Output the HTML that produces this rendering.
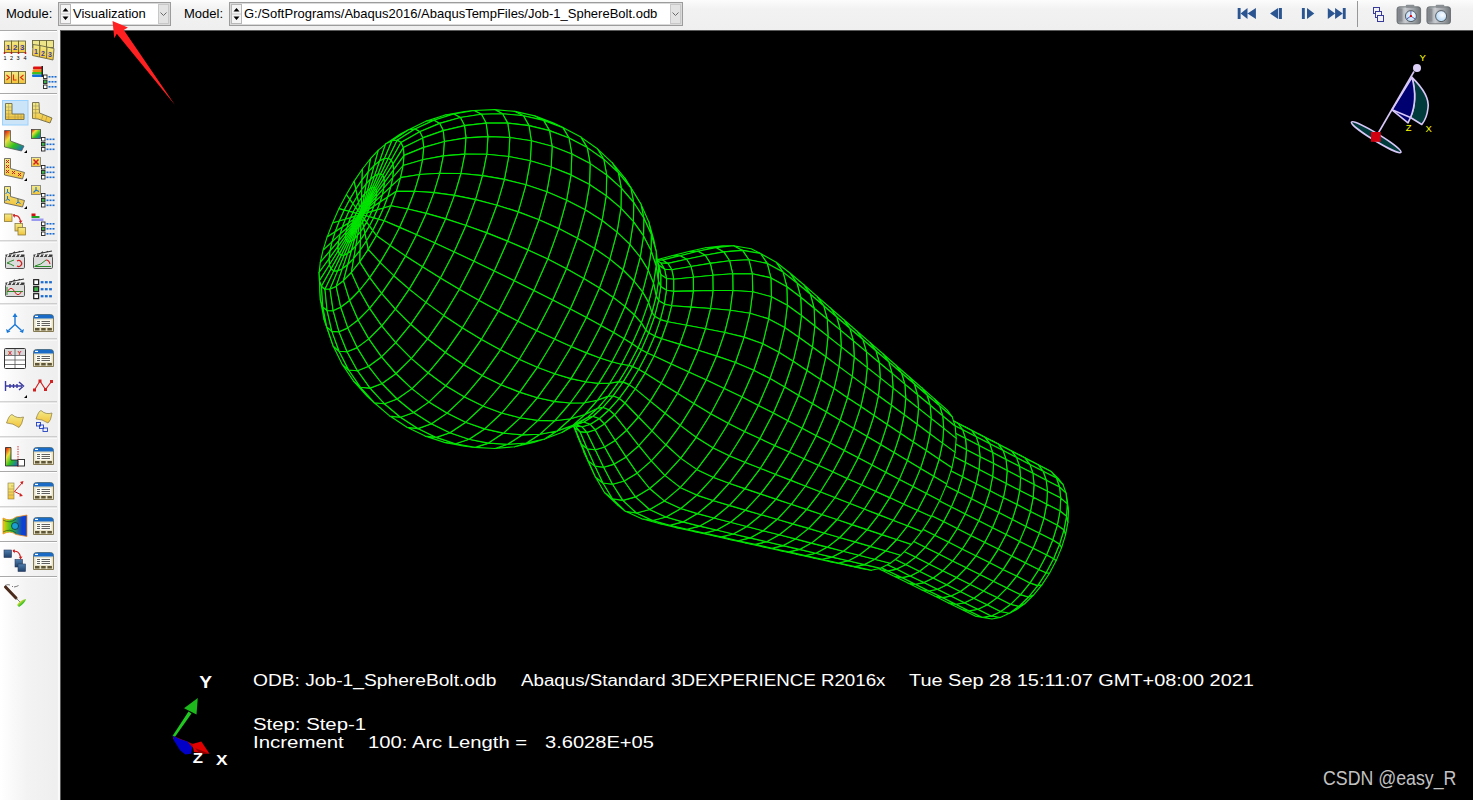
<!DOCTYPE html>
<html><head><meta charset="utf-8">
<style>
*{margin:0;padding:0;box-sizing:border-box}
html,body{width:1473px;height:800px;overflow:hidden;background:#000;font-family:"Liberation Sans",sans-serif}
#top{position:absolute;left:0;top:0;width:1473px;height:30px;background:linear-gradient(#fcfcfc 0%,#f2f2f2 30%,#efefef 100%)}
#left{position:absolute;left:0;top:30px;width:60px;height:770px;background:linear-gradient(90deg,#ffffff 0%,#f3f3f3 45%,#eeeeee 100%)}
#left .sep{position:absolute;left:0;width:57px;height:2px;border-top:1px solid #a9a9a9;border-bottom:1px solid #fff}
#left .edge{position:absolute;left:57px;top:0;width:3px;height:770px;background:linear-gradient(90deg,#eaeaea,#fafafa,#f5f5f5)}
#vp{position:absolute;left:60px;top:30px;width:1413px;height:770px;background:#000;box-shadow:inset 1px 1px 0 #5a5a5a}
.lbl{position:absolute;font-size:13px;color:#000;top:6px;line-height:16px}
.combo{position:absolute;top:2px;height:24px;background:#fff;border:1px solid #9c9c9c;box-shadow:inset 0 0 0 1px #dadada}
.spin{position:absolute;left:1px;top:1px;width:11px;height:20px;border:1px solid #b8b8b8;background:#f4f4f4}
.ctext{position:absolute;top:3px;font-size:13px;line-height:16px;color:#000;white-space:nowrap}
.dd{position:absolute;right:1px;top:1px;width:11px;height:20px;background:#e3e3e3;border:1px solid #c8c8c8}
.ico{position:absolute}
.txt{position:absolute;color:#fff;font-size:16px;line-height:16px;white-space:nowrap}
</style></head><body>
<div id="top">
  <div class="lbl" style="left:6px">Module:</div>
  <div class="combo" style="left:58px;width:113px">
    <div class="spin"><svg width="9" height="18" style="position:absolute;left:0;top:0"><path d="M1.5 6.5 L4.5 3 L7.5 6.5Z M1.5 11.5 L4.5 15 L7.5 11.5Z" fill="#000"/><line x1="0" y1="9" x2="9" y2="9" stroke="#c8c8c8"/></svg></div>
    <div class="ctext" style="left:14px">Visualization</div>
    <div class="dd"><svg width="9" height="18" style="position:absolute;left:0;top:0"><path d="M1.5 7.5 L4.5 10.5 L7.5 7.5" fill="none" stroke="#6a6a6a" stroke-width="1"/></svg></div>
  </div>
  <div class="lbl" style="left:184px">Model:</div>
  <div class="combo" style="left:229px;width:454px">
    <div class="spin"><svg width="9" height="18" style="position:absolute;left:0;top:0"><path d="M1.5 6.5 L4.5 3 L7.5 6.5Z M1.5 11.5 L4.5 15 L7.5 11.5Z" fill="#000"/><line x1="0" y1="9" x2="9" y2="9" stroke="#c8c8c8"/></svg></div>
    <div class="ctext" style="left:14px">G:/SoftPrograms/Abaqus2016/AbaqusTempFiles/Job-1_SphereBolt.odb</div>
    <div class="dd"><svg width="9" height="18" style="position:absolute;left:0;top:0"><path d="M1.5 7.5 L4.5 10.5 L7.5 7.5" fill="none" stroke="#6a6a6a" stroke-width="1"/></svg></div>
  </div>
  <svg width="1473" height="30" style="position:absolute;left:0;top:0">
<g fill="#2b5591">
<rect x="1237.7" y="8" width="2.9" height="11"/><path d="M1240.6 13.5 L1247.5 8 L1247.5 19Z M1247.5 13.5 L1255.9 8 L1255.9 19Z"/>
<path d="M1270 13.5 L1278.1 8 L1278.1 19Z"/><rect x="1278.9" y="8" width="3" height="11"/>
<rect x="1301.9" y="8" width="2.9" height="11"/><path d="M1307 8 L1314.3 13.5 L1307 19Z"/>
<path d="M1327.8 8 L1335.1 13.5 L1327.8 19Z M1335.1 8 L1342.8 13.5 L1335.1 19Z"/><rect x="1342.8" y="8" width="2.9" height="11"/>
</g>
<rect x="1357" y="1" width="1" height="26" fill="#979797"/>
<g fill="none" stroke="#3a3a9a" stroke-width="1">
<rect x="1373.5" y="7.5" width="6" height="6" fill="#f2f2f2"/><rect x="1375.5" y="11.5" width="6" height="6" fill="#f2f2f2"/><rect x="1377.5" y="15.5" width="6" height="6" fill="#f2f2f2"/>
</g>
<defs>
<linearGradient id="cam" x1="0" x2="1"><stop offset="0" stop-color="#7d8288"/><stop offset="0.35" stop-color="#c9ccd0"/><stop offset="0.7" stop-color="#9ea3a8"/><stop offset="1" stop-color="#6e7378"/></linearGradient>
<radialGradient id="lens" cx="0.6" cy="0.4" r="0.7"><stop offset="0" stop-color="#ffffff"/><stop offset="1" stop-color="#a9d2f5"/></radialGradient>
</defs>
<g>
<rect x="1397" y="6.8" width="23.6" height="17" rx="2.5" fill="url(#cam)" stroke="#5f6468" stroke-width="0.8"/>
<rect x="1405.8" y="4.8" width="8.6" height="3" rx="1" fill="#8a8f94"/>
<rect x="1398.5" y="8.5" width="4" height="13" fill="#6f7479" opacity="0.5"/>
<circle cx="1410.9" cy="16.1" r="5.5" fill="url(#lens)" stroke="#4a4f55" stroke-width="0.9"/>
<path d="M1410.9 16.1 L1410.9 11 M1410.9 16.1 L1406.8 18.9 M1410.9 16.1 L1415 18.9" stroke="#3a3aa0" stroke-width="0.8"/>
<rect x="1409.9" y="15.1" width="2" height="2" fill="#e00000"/>
</g>
<g>
<rect x="1426.9" y="6.8" width="23.6" height="17" rx="2.5" fill="url(#cam)" stroke="#5f6468" stroke-width="0.8"/>
<rect x="1435.7" y="4.8" width="8.6" height="3" rx="1" fill="#8a8f94"/>
<rect x="1428.4" y="8.5" width="4" height="13" fill="#6f7479" opacity="0.5"/>
<circle cx="1441.1" cy="16.1" r="5.5" fill="url(#lens)" stroke="#4a4f55" stroke-width="0.9"/>
</g>
</svg>

</div>
<div id="left">
  <div class="edge"></div>
  <svg width="60" height="800" style="position:absolute;left:0;top:-30px">
<defs>
<linearGradient id="yel" x1="0" y1="0" x2="0" y2="1"><stop offset="0" stop-color="#f3ec8a"/><stop offset="1" stop-color="#f2c23a"/></linearGradient>
<linearGradient id="rb" x1="0" y1="0" x2="1" y2="1"><stop offset="0" stop-color="#e00000"/><stop offset="0.3" stop-color="#f0e040"/><stop offset="0.6" stop-color="#30c020"/><stop offset="1" stop-color="#1060e0"/></linearGradient>
<linearGradient id="bsq" x1="0" y1="0" x2="0" y2="1"><stop offset="0" stop-color="#4f7fae"/><stop offset="1" stop-color="#1e3f6a"/></linearGradient>
<g id="win"><path d="M0.5 3.5 Q0.5 0.5 3.5 0.5 L17.5 0.5 Q20.5 0.5 20.5 3.5 L20.5 17.5 L0.5 17.5Z" fill="#e8e2c8" stroke="#857a52"/>
<path d="M0.5 3.5 Q0.5 0.5 3.5 0.5 L17.5 0.5 Q20.5 0.5 20.5 3.5 L20.5 4.5 L0.5 4.5Z" fill="#1a6bc6"/>
<rect x="2" y="1.8" width="3" height="1.2" fill="#fff"/>
<rect x="2.5" y="6" width="16" height="7" fill="#fbfaf3"/>
<g stroke="#3a3a3a" stroke-width="0.8"><line x1="4" y1="7.5" x2="7" y2="7.5"/><line x1="8.5" y1="7.5" x2="17" y2="7.5"/><line x1="4" y1="9.5" x2="7" y2="9.5"/><line x1="8.5" y1="9.5" x2="17" y2="9.5"/><line x1="4" y1="11.5" x2="7" y2="11.5"/><line x1="8.5" y1="11.5" x2="17" y2="11.5"/></g>
<rect x="2" y="14" width="4.5" height="2.5" fill="#5e5636"/><rect x="8.2" y="14" width="4.5" height="2.5" fill="#5e5636"/><rect x="14.4" y="14" width="4.5" height="2.5" fill="#5e5636"/></g>
<g id="chk"><rect x="0.5" y="0.5" width="3.5" height="3.5" fill="#fff" stroke="#222" stroke-width="0.9"/><rect x="0.5" y="5.5" width="3.5" height="3.5" fill="#3fb24a" stroke="#222" stroke-width="0.9"/><rect x="0.5" y="10.5" width="3.5" height="3.5" fill="#fff" stroke="#222" stroke-width="0.9"/>
<g fill="#1a6bd0"><rect x="5.5" y="1.5" width="2" height="1.6"/><rect x="8.5" y="1.5" width="2" height="1.6"/><rect x="11.5" y="1.5" width="2" height="1.6"/><rect x="5.5" y="6.5" width="2" height="1.6"/><rect x="8.5" y="6.5" width="2" height="1.6"/><rect x="11.5" y="6.5" width="2" height="1.6"/><rect x="5.5" y="11.5" width="2" height="1.6"/><rect x="8.5" y="11.5" width="2" height="1.6"/><rect x="11.5" y="11.5" width="2" height="1.6"/></g></g>
<g id="clap"><rect x="0.5" y="4.5" width="19" height="12" rx="1.2" fill="#dcdcdc" stroke="#555"/>
<path d="M0.5 4.5 L19.5 4.5 L19.5 2.5 L0.5 2.5Z" fill="#333"/>
<path d="M2 4.5 L4 2.5 M6 4.5 L8 2.5 M10 4.5 L12 2.5 M14 4.5 L16 2.5" stroke="#fff" stroke-width="1.2"/>
<path d="M4 2 L19 -1 M8 1.2 L10 -0.3 M13 0.2 L15 -0.8" stroke="#333" stroke-width="1.2"/></g>
<path id="tri" d="M0 3 L3 0 L3 3Z" fill="#000"/>
</defs>
<rect x="0" y="30" width="57" height="1" fill="#a9a9a9"/><rect x="0" y="31" width="57" height="1" fill="#fff"/>
<rect x="0" y="93" width="57" height="1" fill="#a9a9a9"/><rect x="0" y="94" width="57" height="1" fill="#fff"/>
<rect x="0" y="240.5" width="57" height="1" fill="#a9a9a9"/><rect x="0" y="241.5" width="57" height="1" fill="#fff"/>
<rect x="0" y="303.5" width="57" height="1" fill="#a9a9a9"/><rect x="0" y="304.5" width="57" height="1" fill="#fff"/>
<rect x="0" y="338.5" width="57" height="1" fill="#a9a9a9"/><rect x="0" y="339.5" width="57" height="1" fill="#fff"/>
<rect x="0" y="401.5" width="57" height="1" fill="#a9a9a9"/><rect x="0" y="402.5" width="57" height="1" fill="#fff"/>
<rect x="0" y="436.5" width="57" height="1" fill="#a9a9a9"/><rect x="0" y="437.5" width="57" height="1" fill="#fff"/>
<rect x="0" y="471" width="57" height="1" fill="#a9a9a9"/><rect x="0" y="472" width="57" height="1" fill="#fff"/>
<rect x="0" y="506.5" width="57" height="1" fill="#a9a9a9"/><rect x="0" y="507.5" width="57" height="1" fill="#fff"/>
<rect x="0" y="541" width="57" height="1" fill="#a9a9a9"/><rect x="0" y="542" width="57" height="1" fill="#fff"/>
<rect x="0" y="576" width="57" height="1" fill="#a9a9a9"/><rect x="0" y="577" width="57" height="1" fill="#fff"/>
<g stroke="#6b6640" stroke-width="0.9" fill="url(#yel)"><rect x="4.5" y="41" width="7" height="11.5"/><rect x="11.5" y="41" width="7" height="11.5"/><rect x="18.5" y="41" width="7" height="11.5"/></g>
<g font-family="Liberation Sans" font-size="8" fill="#3a3aa0" font-weight="bold"><text x="6" y="50">1</text><text x="13" y="50">2</text><text x="20" y="50">3</text></g>
<g fill="#e00000"><circle cx="4.5" cy="53" r="0.9"/><circle cx="11.5" cy="53" r="0.9"/><circle cx="18.5" cy="53" r="0.9"/><circle cx="25.5" cy="53" r="0.9"/></g>
<g font-family="Liberation Sans" font-size="5.5" fill="#000"><text x="3.5" y="60">1</text><text x="10" y="60">2</text><text x="16.5" y="60">3</text><text x="23.5" y="60">4</text></g>
<g stroke="#6b6640" stroke-width="0.9" fill="#eee58a"><rect x="32.5" y="40.5" width="7" height="7"/><rect x="39.5" y="40.5" width="7" height="7"/><rect x="46.5" y="40.5" width="7" height="7"/></g>
<g stroke="#6b6640" stroke-width="0.9" fill="url(#yel)"><path d="M33 44.5 L40 45.5 L39.5 57 L32.5 55.5Z"/><path d="M40 45.5 L47 47 L46.5 58.5 L39.5 57Z"/><path d="M47 47 L54 48.5 L53 60 L46.5 58.5Z"/></g>
<g font-family="Liberation Sans" font-size="7" fill="#3a3aa0" font-weight="bold"><text x="34" y="54">1</text><text x="41" y="55.5">2</text><text x="48" y="57">3</text></g>
<g stroke="#6b6640" stroke-width="0.9" fill="url(#yel)"><rect x="4.5" y="71.5" width="7" height="12"/><rect x="11.5" y="71.5" width="7" height="12"/><rect x="18.5" y="71.5" width="7" height="12"/></g>
<g stroke="#e03010" stroke-width="1.1" fill="none"><path d="M6.5 75 L9.5 77.5 L6.5 80"/><path d="M13.5 74.5 L13.5 80 L16.5 80"/><path d="M23.5 75 L20.5 77.5 L23.5 80"/></g>
<g><rect x="33" y="66.5" width="9.5" height="3" rx="1" fill="#e01010"/><rect x="32.5" y="69.5" width="10" height="2.5" rx="1" fill="#f08a10"/><rect x="32" y="72" width="10.5" height="2.5" rx="1" fill="#40c020"/><rect x="32" y="74.5" width="10.5" height="2.5" rx="1" fill="#1070e0"/><rect x="41.5" y="66" width="1.5" height="11" fill="#222"/></g>
<use href="#chk" x="43" y="74.5"/>
<rect x="2.5" y="100.5" width="25.5" height="24.5" fill="#cce4f7" stroke="#99d1ff"/>
<g fill="url(#yel)" stroke="#6e6a4a" stroke-width="0.9"><path d="M5.5 103.5 L12 103.5 L12 114 L24 114 L24 119.5 L5.5 119.5Z"/></g>
<g stroke="#8a8050" stroke-width="0.5" opacity="0.8"><line x1="8.7" y1="104" x2="8.7" y2="119"/><line x1="5.5" y1="107" x2="12" y2="107"/><line x1="5.5" y1="110.5" x2="12" y2="110.5"/><line x1="5.5" y1="114" x2="12" y2="114"/><line x1="5.5" y1="117" x2="24" y2="117"/><line x1="15" y1="114" x2="15" y2="119.5"/><line x1="18" y1="114" x2="18" y2="119.5"/><line x1="21" y1="114" x2="21" y2="119.5"/></g>
<g fill="url(#yel)" stroke="#6e6a4a" stroke-width="0.9"><path d="M32.5 102.5 L39 102.5 L39.5 113 L52 118 L50 123 L38 119 L32.5 118.5Z"/></g>
<g stroke="#8a8050" stroke-width="0.5"><line x1="35.7" y1="103" x2="35.7" y2="118"/><line x1="32.5" y1="106" x2="39" y2="106"/><line x1="32.5" y1="109.5" x2="39" y2="109.5"/><line x1="32.5" y1="113" x2="39.5" y2="113"/><line x1="43" y1="114.5" x2="41.5" y2="120"/><line x1="47" y1="116" x2="45.5" y2="121.5"/></g>
<path d="M4.5 130.5 L10.5 130.5 L10.5 141 L24 146 L21.5 151 L4.5 147Z" fill="url(#rb)" stroke="#555" stroke-width="0.8"/>
<use href="#tri" x="24" y="150"/>
<rect x="31.5" y="129.5" width="9" height="9" fill="url(#rb)" stroke="#444" stroke-width="0.8"/><use href="#chk" x="41" y="137"/>
<path d="M4.5 158.5 L10.5 158.5 L10.5 168.5 L24.5 172.5 L22.5 179 L4.5 175Z" fill="url(#yel)" stroke="#555" stroke-width="0.8"/>
<g stroke="#d02020" stroke-width="1"><path d="M6 160 L9 163 M9 160 L6 163 M6 165 L9 168 M9 165 L6 168 M6 170 L9 173 M9 170 L6 173 M12 171 L15 174 M15 171 L12 174 M18 173 L21 176 M21 173 L18 176"/></g>
<use href="#tri" x="24" y="178"/>
<rect x="31.5" y="157.5" width="9" height="9" fill="url(#yel)" stroke="#777" stroke-width="0.8"/><path d="M33.5 159.5 L38.5 164.5 M38.5 159.5 L33.5 164.5" stroke="#d02020" stroke-width="1.5"/><use href="#chk" x="41" y="165"/>
<path d="M4.5 186.5 L10.5 186.5 L10.5 196.5 L24.5 200.5 L22.5 207 L4.5 203Z" fill="url(#yel)" stroke="#555" stroke-width="0.8"/>
<g stroke="#1a78d8" stroke-width="1"><path d="M7.5 192 L7.5 189 M7.5 192 L5.5 194 M7.5 192 L10 193.5 M7.5 199 L7.5 196 M7.5 199 L5.5 201 M7.5 199 L10 200.5 M18 202 L18 199 M18 202 L16 204 M18 202 L20.5 203.5"/></g>
<use href="#tri" x="24" y="206"/>
<rect x="31.5" y="185.5" width="9" height="9" fill="url(#yel)" stroke="#777" stroke-width="0.8"/><path d="M36 190 L36 187 M36 190 L33.5 192.5 M36 190 L39 191.5" stroke="#1a78d8" stroke-width="1.1"/><use href="#chk" x="41" y="193"/>
<g fill="url(#yel)" stroke="#8a7a40" stroke-width="0.8"><rect x="4.5" y="214" width="7.5" height="7.5"/><rect x="15" y="223.5" width="7.5" height="7.5"/><rect x="18" y="227.5" width="7.5" height="7.5"/></g>
<path d="M13.5 216 Q19 214 20.5 221" fill="none" stroke="#d02020" stroke-width="1.2"/><path d="M12.5 214.5 L14.5 218 L15 214Z M19 221 L22.5 220.5 L20.5 223.5Z" fill="#d02020"/>
<rect x="31.5" y="213.5" width="4" height="2.5" fill="#d01010"/><rect x="31.5" y="216" width="8" height="2" fill="#20a020"/><rect x="31.5" y="218.5" width="12" height="2.5" fill="#9a9af0"/><use href="#chk" x="41" y="221.5"/>
<g transform="translate(5,252)"><use href="#clap"/><path d="M2 11 Q6 9 9 8 M2 11 Q6 12 9 14" fill="none" stroke="#2a8a2a" stroke-width="1"/><path d="M12 9 A3 3 0 1 1 12 14" fill="none" stroke="#d02020" stroke-width="1.2"/></g>
<g transform="translate(33,252)"><use href="#clap"/><path d="M1.5 14.5 L18 14.5 M2 14 Q8 13 13 8" fill="none" stroke="#2a8a2a" stroke-width="1"/><path d="M13 8 Q16 8 17 12" fill="none" stroke="#d02020" stroke-width="1.1"/></g>
<g transform="translate(5,280)"><use href="#clap"/><path d="M2 7 L2 15 M2 11.5 L18 11.5" stroke="#2a8a2a" stroke-width="1" fill="none"/><path d="M2.5 11.5 Q6 5 9.5 11.5 Q13 18 16.5 11.5" fill="none" stroke="#d02020" stroke-width="1"/></g>
<g transform="translate(33,279) scale(1.4)"><use href="#chk"/></g>
<g stroke="#1a78d8" stroke-width="1.4" fill="#1a78d8"><path d="M15 324.5 L15 316 M15 324.5 L8.5 330.5 M15 324.5 L21.5 330.5" fill="none"/><path d="M12.5 317 L15 313 L17.5 317Z M6 329 L7 333 L10.5 331.5Z M24 329 L23 333 L19.5 331.5Z" stroke="none"/></g>
<use href="#win" x="33" y="314"/>
<rect x="4.5" y="348.5" width="21" height="20" rx="1" fill="#fff" stroke="#333"/><rect x="5" y="349" width="20" height="6" fill="#d8d8d8"/><path d="M15 349 L15 368 M5 355.5 L25 355.5 M5 360 L25 360 M5 364.5 L25 364.5" stroke="#555" stroke-width="0.8"/>
<g font-family="Liberation Sans" font-size="6" font-weight="bold" fill="#d02020"><text x="8" y="354.5">X</text><text x="17.5" y="354.5">Y</text></g>
<use href="#win" x="33" y="349"/>
<path d="M5.5 381 L5.5 391 M5.5 386 L22 386 M10 384 L10 388 M13.5 384 L13.5 388 M17 384 L17 388 M19 382 L23.5 386 L19 390" fill="none" stroke="#3a3aa0" stroke-width="1.4"/><use href="#tri" x="24" y="395"/>
<path d="M34.5 390 L40 381 L45.5 389.5 L51.5 381.5" fill="none" stroke="#d02020" stroke-width="1.1"/><g fill="#d02020"><rect x="33" y="388.5" width="3" height="3"/><rect x="38.5" y="379.5" width="3" height="3"/><rect x="44" y="388" width="3" height="3"/><rect x="50" y="380" width="3" height="3"/></g>
<path d="M6.5 423 Q9 415 12 414.5 Q17 419 23.5 417 Q22 425 19 427.5 Q13 423 6.5 423Z" fill="url(#yel)" stroke="#8a7a40" stroke-width="0.7"/>
<path d="M36 419 Q38.5 411 41 410.5 Q46 415 52 413 Q51 421 48 423 Q42 419 36 419Z" fill="url(#yel)" stroke="#8a7a40" stroke-width="0.7"/><g fill="none" stroke="#2040c0" stroke-width="0.9"><rect x="36.5" y="422.5" width="4" height="3.5"/><rect x="39.5" y="425" width="4" height="3.5"/><rect x="43" y="428" width="4.5" height="3.5"/></g>
<path d="M5.5 447.5 L11 447.5 L11 460 L18 460 L18 466 L5.5 466Z" fill="url(#rb)" stroke="#222" stroke-width="0.8"/><rect x="18" y="459.5" width="6.5" height="6.5" fill="#fff" stroke="#222" stroke-width="0.9"/><path d="M18 446 L18 467" stroke="#d02020" stroke-width="0.9" stroke-dasharray="1.5 1"/>
<use href="#win" x="33" y="447"/>
<rect x="8" y="483" width="6" height="16" fill="url(#yel)" stroke="#8a7a40" stroke-width="0.6"/><path d="M11 486 L14 486 M8 489 L14 489 M8 492 L14 492 M8 495 L14 495" stroke="#9a8a50" stroke-width="0.5"/><path d="M14.5 491.5 L22.5 482.5 M14.5 491.5 L21.5 495" stroke="#d02020" stroke-width="1"/><path d="M20 482 L23.5 481 L22.5 484.5Z M20 493 L23 496 L19.5 496.5Z" fill="#d02020"/>
<use href="#win" x="33" y="482"/>
<defs><linearGradient id="ch" x1="0" y1="0" x2="1" y2="0"><stop offset="0" stop-color="#e8d000"/><stop offset="0.35" stop-color="#30c030"/><stop offset="0.8" stop-color="#1040d0"/></linearGradient></defs>
<path d="M3 518 Q10 522 16 517 L27 515 L27 536.5 L16 534.5 Q10 530 3 534Z" fill="url(#ch)" stroke="#f09020" stroke-width="0.8"/><path d="M3 520 Q10 524 16 519 M3 532 Q10 528 16 533" fill="none" stroke="#222" stroke-width="0.5"/><circle cx="15" cy="526" r="3.5" fill="#1aa0d0" stroke="#111" stroke-width="0.6"/>
<use href="#win" x="33" y="517"/>
<g fill="url(#bsq)" stroke="#2a3a5a" stroke-width="0.6"><rect x="4" y="550" width="7.5" height="7.5"/><rect x="15" y="559.5" width="7.5" height="7.5"/><rect x="18" y="564" width="7.5" height="7.5"/></g><path d="M13 551.5 Q19 550 20.5 557" fill="none" stroke="#d02020" stroke-width="1.2"/><path d="M12.5 550 L14.5 553.5 L15 549.5Z M19 557 L22.5 556.5 L20.5 559.5Z" fill="#d02020"/>
<use href="#win" x="33" y="552"/>
<path d="M5 585.5 Q8 584 10 585 M12 586.5 L13 586.5 M14 587 Q17 586.5 18.5 585.5" fill="none" stroke="#222" stroke-width="0.6"/><path d="M5.5 587 L16 598" stroke="#4a2a1a" stroke-width="3" stroke-linecap="round"/><path d="M16 598 L21 603" stroke="#555" stroke-width="0.7"/><path d="M17 605 Q20 600 26 599 Q25 603 19 607Z" fill="url(#rb)"/>
</svg>
</div>
<div id="vp"></div>
<svg width="1473" height="800" style="position:absolute;left:0;top:0"><g fill="#000" stroke="#00e600" stroke-width="1.15" stroke-linejoin="round"><polygon points="1038.3,465.0 1031.9,461.4 1045.0,468.2 1051.5,471.8"/><polygon points="1025.0,458.1 1018.7,454.5 1031.9,461.4 1038.3,465.0"/><polygon points="961.9,609.5 969.3,610.9 982.7,617.4 975.2,616.1"/><polygon points="1056.4,478.1 1051.5,471.8 1058.2,478.4 1063.0,484.5"/><polygon points="1011.7,451.2 1005.4,447.7 1018.7,454.5 1025.0,458.1"/><polygon points="948.5,602.9 955.9,604.3 969.3,610.9 961.9,609.5"/><polygon points="1043.1,471.3 1038.3,465.0 1051.5,471.8 1056.4,478.1"/><polygon points="982.7,617.4 991.3,615.9 1000.2,617.5 991.9,619.0"/><polygon points="998.4,444.3 992.1,440.8 1005.4,447.7 1011.7,451.2"/><polygon points="935.1,596.3 942.5,597.6 955.9,604.3 948.5,602.9"/><polygon points="1029.8,464.4 1025.0,458.1 1038.3,465.0 1043.1,471.3"/><polygon points="969.3,610.9 977.9,609.3 991.3,615.9 982.7,617.4"/><polygon points="1059.5,487.0 1056.4,478.1 1063.0,484.5 1066.0,493.1"/><polygon points="985.0,437.4 978.8,433.9 992.1,440.8 998.4,444.3"/><polygon points="921.6,589.7 929.0,591.0 942.5,597.6 935.1,596.3"/><polygon points="1016.5,457.6 1011.7,451.2 1025.0,458.1 1029.8,464.4"/><polygon points="1046.2,480.2 1043.1,471.3 1056.4,478.1 1059.5,487.0"/><polygon points="1067.2,503.9 1066.0,493.1 1067.4,501.3 1068.5,511.0"/><polygon points="955.9,604.3 964.5,602.7 977.9,609.3 969.3,610.9"/><polygon points="991.3,615.9 1000.7,611.5 1009.4,613.2 1000.2,617.5"/><polygon points="971.6,430.5 965.4,427.0 978.8,433.9 985.0,437.4"/><polygon points="1009.4,613.2 1018.9,606.3 1024.9,603.5 1016.3,609.7"/><polygon points="908.1,583.1 915.4,584.3 929.0,591.0 921.6,589.7"/><polygon points="1003.1,450.6 998.4,444.3 1011.7,451.2 1016.5,457.6"/><polygon points="1060.7,498.1 1059.5,487.0 1066.0,493.1 1067.2,503.9"/><polygon points="1032.9,473.3 1029.8,464.4 1043.1,471.3 1046.2,480.2"/><polygon points="977.9,609.3 987.3,604.8 1000.7,611.5 991.3,615.9"/><polygon points="942.5,597.6 951.0,596.0 964.5,602.7 955.9,604.3"/><polygon points="1066.5,516.3 1067.2,503.9 1068.5,511.0 1067.9,522.3"/><polygon points="958.1,423.5 951.9,420.0 965.4,427.0 971.6,430.5"/><polygon points="1000.7,611.5 1010.6,604.3 1018.9,606.3 1009.4,613.2"/><polygon points="894.6,576.4 901.9,577.6 915.4,584.3 908.1,583.1"/><polygon points="1047.4,491.3 1046.2,480.2 1059.5,487.0 1060.7,498.1"/><polygon points="989.7,443.7 985.0,437.4 998.4,444.3 1003.1,450.6"/><polygon points="1019.5,466.4 1016.5,457.6 1029.8,464.4 1032.9,473.3"/><polygon points="964.5,602.7 973.9,598.2 987.3,604.8 977.9,609.3"/><polygon points="929.0,591.0 937.5,589.3 951.0,596.0 942.5,597.6"/><polygon points="1018.9,606.3 1028.5,597.0 1033.5,595.1 1024.9,603.5"/><polygon points="1060.0,511.0 1060.7,498.1 1067.2,503.9 1066.5,516.3"/><polygon points="944.5,416.5 938.5,413.1 951.9,420.0 958.1,423.5"/><polygon points="1063.9,530.0 1066.5,516.3 1067.9,522.3 1065.6,534.6"/><polygon points="987.3,604.8 997.2,597.6 1010.6,604.3 1000.7,611.5"/><polygon points="881.0,569.7 888.2,570.9 901.9,577.6 894.6,576.4"/><polygon points="1034.0,484.4 1032.9,473.3 1046.2,480.2 1047.4,491.3"/><polygon points="976.2,436.8 971.6,430.5 985.0,437.4 989.7,443.7"/><polygon points="1006.0,459.5 1003.1,450.6 1016.5,457.6 1019.5,466.4"/><polygon points="951.0,596.0 960.4,591.5 973.9,598.2 964.5,602.7"/><polygon points="915.4,584.3 923.9,582.6 937.5,589.3 929.0,591.0"/><polygon points="1028.5,597.0 1037.7,585.6 1041.9,584.9 1033.5,595.1"/><polygon points="1010.6,604.3 1020.5,594.6 1028.5,597.0 1018.9,606.3"/><polygon points="1046.6,504.2 1047.4,491.3 1060.7,498.1 1060.0,511.0"/><polygon points="1059.5,544.3 1063.9,530.0 1065.6,534.6 1061.6,547.6"/><polygon points="1057.3,525.2 1060.0,511.0 1066.5,516.3 1063.9,530.0"/><polygon points="973.9,598.2 983.7,590.9 997.2,597.6 987.3,604.8"/><polygon points="1037.7,585.6 1046.1,572.7 1049.5,573.2 1041.9,584.9"/><polygon points="867.3,563.0 874.5,564.2 888.2,570.9 881.0,569.7"/><polygon points="1020.6,477.5 1019.5,466.4 1032.9,473.3 1034.0,484.4"/><polygon points="962.6,429.8 958.1,423.5 971.6,430.5 976.2,436.8"/><polygon points="1053.5,558.8 1059.5,544.3 1061.6,547.6 1056.2,560.6"/><polygon points="992.6,452.6 989.7,443.7 1003.1,450.6 1006.0,459.5"/><polygon points="1046.1,572.7 1053.5,558.8 1056.2,560.6 1049.5,573.2"/><polygon points="937.5,589.3 946.8,584.8 960.4,591.5 951.0,596.0"/><polygon points="901.9,577.6 910.3,575.9 923.9,582.6 915.4,584.3"/><polygon points="997.2,597.6 1007.0,587.9 1020.5,594.6 1010.6,604.3"/><polygon points="1020.5,594.6 1030.0,582.9 1037.7,585.6 1028.5,597.0"/><polygon points="1033.2,497.3 1034.0,484.4 1047.4,491.3 1046.6,504.2"/><polygon points="1052.7,540.0 1057.3,525.2 1063.9,530.0 1059.5,544.3"/><polygon points="1043.9,518.3 1046.6,504.2 1060.0,511.0 1057.3,525.2"/><polygon points="960.4,591.5 970.1,584.2 983.7,590.9 973.9,598.2"/><polygon points="1007.1,470.6 1006.0,459.5 1019.5,466.4 1020.6,477.5"/><polygon points="949.1,422.8 944.5,416.5 958.1,423.5 962.6,429.8"/><polygon points="1030.0,582.9 1038.8,569.5 1046.1,572.7 1037.7,585.6"/><polygon points="979.0,445.6 976.2,436.8 989.7,443.7 992.6,452.6"/><polygon points="923.9,582.6 933.2,578.0 946.8,584.8 937.5,589.3"/><polygon points="888.2,570.9 896.6,569.1 910.3,575.9 901.9,577.6"/><polygon points="1046.5,555.0 1052.7,540.0 1059.5,544.3 1053.5,558.8"/><polygon points="1038.8,569.5 1046.5,555.0 1053.5,558.8 1046.1,572.7"/><polygon points="983.7,590.9 993.5,581.2 1007.0,587.9 997.2,597.6"/><polygon points="846.9,565.3 855.0,566.6 871.3,570.3 863.6,569.0"/><polygon points="1007.0,587.9 1016.6,576.1 1030.0,582.9 1020.5,594.6"/><polygon points="1019.7,490.4 1020.6,477.5 1034.0,484.4 1033.2,497.3"/><polygon points="1039.3,533.2 1043.9,518.3 1057.3,525.2 1052.7,540.0"/><polygon points="1030.4,511.5 1033.2,497.3 1046.6,504.2 1043.9,518.3"/><polygon points="946.8,584.8 956.6,577.5 970.1,584.2 960.4,591.5"/><polygon points="993.6,463.6 992.6,452.6 1006.0,459.5 1007.1,470.6"/><polygon points="1016.6,576.1 1025.4,562.7 1038.8,569.5 1030.0,582.9"/><polygon points="965.5,438.6 962.6,429.8 976.2,436.8 979.0,445.6"/><polygon points="910.3,575.9 919.5,571.3 933.2,578.0 923.9,582.6"/><polygon points="874.5,564.2 882.9,562.4 896.6,569.1 888.2,570.9"/><polygon points="1033.0,548.2 1039.3,533.2 1052.7,540.0 1046.5,555.0"/><polygon points="1025.4,562.7 1033.0,548.2 1046.5,555.0 1038.8,569.5"/><polygon points="970.1,584.2 980.0,574.4 993.5,581.2 983.7,590.9"/><polygon points="993.5,581.2 1003.1,569.4 1016.6,576.1 1007.0,587.9"/><polygon points="939.6,405.9 934.5,398.9 947.3,410.1 952.2,416.8"/><polygon points="830.2,561.6 838.5,563.0 855.0,566.6 846.9,565.3"/><polygon points="1006.2,483.5 1007.1,470.6 1020.6,477.5 1019.7,490.4"/><polygon points="1025.8,526.4 1030.4,511.5 1043.9,518.3 1039.3,533.2"/><polygon points="1016.9,504.6 1019.7,490.4 1033.2,497.3 1030.4,511.5"/><polygon points="933.2,578.0 942.9,570.7 956.6,577.5 946.8,584.8"/><polygon points="980.0,456.7 979.0,445.6 992.6,452.6 993.6,463.6"/><polygon points="1003.1,569.4 1011.8,555.9 1025.4,562.7 1016.6,576.1"/><polygon points="951.8,431.6 949.1,422.8 962.6,429.8 965.5,438.6"/><polygon points="896.6,569.1 905.8,564.5 919.5,571.3 910.3,575.9"/><polygon points="1019.5,541.4 1025.8,526.4 1039.3,533.2 1033.0,548.2"/><polygon points="1011.8,555.9 1019.5,541.4 1033.0,548.2 1025.4,562.7"/><polygon points="956.6,577.5 966.4,567.7 980.0,574.4 970.1,584.2"/><polygon points="980.0,574.4 989.5,562.6 1003.1,569.4 993.5,581.2"/><polygon points="992.6,476.5 993.6,463.6 1007.1,470.6 1006.2,483.5"/><polygon points="1012.3,519.5 1016.9,504.6 1030.4,511.5 1025.8,526.4"/><polygon points="813.4,557.9 822.0,559.3 838.5,563.0 830.2,561.6"/><polygon points="927.0,395.0 921.7,387.7 934.5,398.9 939.6,405.9"/><polygon points="855.0,566.6 864.4,564.6 880.4,568.3 871.3,570.3"/><polygon points="1003.4,497.7 1006.2,483.5 1019.7,490.4 1016.9,504.6"/><polygon points="919.5,571.3 929.2,563.9 942.9,570.7 933.2,578.0"/><polygon points="966.4,449.7 965.5,438.6 979.0,445.6 980.0,456.7"/><polygon points="989.5,562.6 998.3,549.1 1011.8,555.9 1003.1,569.4"/><polygon points="882.9,562.4 892.0,557.7 905.8,564.5 896.6,569.1"/><polygon points="1006.0,534.6 1012.3,519.5 1025.8,526.4 1019.5,541.4"/><polygon points="998.3,549.1 1006.0,534.6 1019.5,541.4 1011.8,555.9"/><polygon points="942.9,570.7 952.7,560.9 966.4,567.7 956.6,577.5"/><polygon points="966.4,567.7 975.9,555.8 989.5,562.6 980.0,574.4"/><polygon points="979.0,469.6 980.0,456.7 993.6,463.6 992.6,476.5"/><polygon points="998.7,512.6 1003.4,497.7 1016.9,504.6 1012.3,519.5"/><polygon points="989.8,490.8 992.6,476.5 1006.2,483.5 1003.4,497.7"/><polygon points="942.7,415.9 939.6,405.9 952.2,416.8 955.2,426.3"/><polygon points="905.8,564.5 915.5,557.1 929.2,563.9 919.5,571.3"/><polygon points="796.5,554.1 805.4,555.6 822.0,559.3 813.4,557.9"/><polygon points="952.7,442.6 951.8,431.6 965.5,438.6 966.4,449.7"/><polygon points="914.3,384.0 908.8,376.5 921.7,387.7 927.0,395.0"/><polygon points="975.9,555.8 984.7,542.3 998.3,549.1 989.5,562.6"/><polygon points="838.5,563.0 848.3,560.8 864.4,564.6 855.0,566.6"/><polygon points="992.4,527.7 998.7,512.6 1012.3,519.5 1006.0,534.6"/><polygon points="984.7,542.3 992.4,527.7 1006.0,534.6 998.3,549.1"/><polygon points="929.2,563.9 939.0,554.0 952.7,560.9 942.9,570.7"/><polygon points="952.7,560.9 962.2,549.0 975.9,555.8 966.4,567.7"/><polygon points="965.4,462.6 966.4,449.7 980.0,456.7 979.0,469.6"/><polygon points="985.1,505.7 989.8,490.8 1003.4,497.7 998.7,512.6"/><polygon points="976.1,483.8 979.0,469.6 992.6,476.5 989.8,490.8"/><polygon points="892.0,557.7 901.7,550.2 915.5,557.1 905.8,564.5"/><polygon points="962.2,549.0 971.0,535.4 984.7,542.3 975.9,555.8"/><polygon points="864.4,564.6 874.7,559.3 890.3,563.3 880.4,568.3"/><polygon points="779.5,550.4 788.7,551.9 805.4,555.6 796.5,554.1"/><polygon points="978.7,520.8 985.1,505.7 998.7,512.6 992.4,527.7"/><polygon points="930.2,405.3 927.0,395.0 939.6,405.9 942.7,415.9"/><polygon points="971.0,535.4 978.7,520.8 992.4,527.7 984.7,542.3"/><polygon points="901.5,373.0 895.9,365.2 908.8,376.5 914.3,384.0"/><polygon points="915.5,557.1 925.3,547.2 939.0,554.0 929.2,563.9"/><polygon points="939.0,554.0 948.5,542.1 962.2,549.0 952.7,560.9"/><polygon points="822.0,559.3 832.1,557.1 848.3,560.8 838.5,563.0"/><polygon points="951.7,455.6 952.7,442.6 966.4,449.7 965.4,462.6"/><polygon points="971.4,498.8 976.1,483.8 989.8,490.8 985.1,505.7"/><polygon points="962.4,476.8 965.4,462.6 979.0,469.6 976.1,483.8"/><polygon points="943.7,428.4 942.7,415.9 955.2,426.3 956.2,438.4"/><polygon points="948.5,542.1 957.3,528.5 971.0,535.4 962.2,549.0"/><polygon points="965.1,513.9 971.4,498.8 985.1,505.7 978.7,520.8"/><polygon points="957.3,528.5 965.1,513.9 978.7,520.8 971.0,535.4"/><polygon points="901.7,550.2 911.5,540.3 925.3,547.2 915.5,557.1"/><polygon points="762.5,546.6 772.0,548.2 788.7,551.9 779.5,550.4"/><polygon points="925.3,547.2 934.8,535.2 948.5,542.1 939.0,554.0"/><polygon points="848.3,560.8 859.0,555.3 874.7,559.3 864.4,564.6"/><polygon points="888.7,361.9 882.9,353.8 895.9,365.2 901.5,373.0"/><polygon points="917.5,394.8 914.3,384.0 927.0,395.0 930.2,405.3"/><polygon points="805.4,555.6 815.8,553.3 832.1,557.1 822.0,559.3"/><polygon points="957.7,491.8 962.4,476.8 976.1,483.8 971.4,498.8"/><polygon points="948.7,469.8 951.7,455.6 965.4,462.6 962.4,476.8"/><polygon points="874.7,559.3 885.7,550.8 900.8,555.2 890.3,563.3"/><polygon points="934.8,535.2 943.6,521.6 957.3,528.5 948.5,542.1"/><polygon points="951.3,506.9 957.7,491.8 971.4,498.8 965.1,513.9"/><polygon points="943.6,521.6 951.3,506.9 965.1,513.9 957.3,528.5"/><polygon points="911.5,540.3 921.0,528.3 934.8,535.2 925.3,547.2"/><polygon points="931.1,418.4 930.2,405.3 942.7,415.9 943.7,428.4"/><polygon points="745.5,542.9 755.1,544.4 772.0,548.2 762.5,546.6"/><polygon points="943.9,484.8 948.7,469.8 962.4,476.8 957.7,491.8"/><polygon points="875.8,350.7 869.9,342.4 882.9,353.8 888.7,361.9"/><polygon points="942.5,443.1 943.7,428.4 956.2,438.4 955.1,452.4"/><polygon points="832.1,557.1 843.3,551.2 859.0,555.3 848.3,560.8"/><polygon points="904.8,384.1 901.5,373.0 914.3,384.0 917.5,394.8"/><polygon points="788.7,551.9 799.5,549.4 815.8,553.3 805.4,555.6"/><polygon points="921.0,528.3 929.8,514.7 943.6,521.6 934.8,535.2"/><polygon points="937.5,500.0 943.9,484.8 957.7,491.8 951.3,506.9"/><polygon points="929.8,514.7 937.5,500.0 951.3,506.9 943.6,521.6"/><polygon points="859.0,555.3 870.4,546.4 885.7,550.8 874.7,559.3"/><polygon points="885.7,550.8 896.7,539.5 911.4,544.4 900.8,555.2"/><polygon points="728.3,539.1 738.2,540.7 755.1,544.4 745.5,542.9"/><polygon points="918.5,408.4 917.5,394.8 930.2,405.3 931.1,418.4"/><polygon points="862.8,339.5 856.8,331.0 869.9,342.4 875.8,350.7"/><polygon points="939.1,459.2 942.5,443.1 955.1,452.4 951.9,467.8"/><polygon points="815.8,553.3 827.4,547.1 843.3,551.2 832.1,557.1"/><polygon points="892.1,373.4 888.7,361.9 901.5,373.0 904.8,384.1"/><polygon points="929.8,433.7 931.1,418.4 943.7,428.4 942.5,443.1"/><polygon points="772.0,548.2 783.1,545.6 799.5,549.4 788.7,551.9"/><polygon points="896.7,539.5 907.5,525.8 921.7,531.4 911.4,544.4"/><polygon points="711.1,535.3 721.3,536.9 738.2,540.7 728.3,539.1"/><polygon points="843.3,551.2 855.1,541.9 870.4,546.4 859.0,555.3"/><polygon points="870.4,546.4 882.0,534.6 896.7,539.5 885.7,550.8"/><polygon points="933.6,476.3 939.1,459.2 951.9,467.8 946.7,484.1"/><polygon points="849.8,328.3 843.6,319.5 856.8,331.0 862.8,339.5"/><polygon points="905.8,398.2 904.8,384.1 917.5,394.8 918.5,408.4"/><polygon points="907.5,525.8 917.5,510.3 931.3,516.6 921.7,531.4"/><polygon points="755.1,544.4 766.6,541.7 783.1,545.6 772.0,548.2"/><polygon points="879.3,362.7 875.8,350.7 888.7,361.9 892.1,373.4"/><polygon points="799.5,549.4 811.4,543.1 827.4,547.1 815.8,553.3"/><polygon points="926.3,493.6 933.6,476.3 946.7,484.1 939.7,500.6"/><polygon points="917.5,510.3 926.3,493.6 939.7,500.6 931.3,516.6"/><polygon points="926.2,450.6 929.8,433.7 942.5,443.1 939.1,459.2"/><polygon points="917.1,424.3 918.5,408.4 931.1,418.4 929.8,433.7"/><polygon points="693.8,531.4 704.2,533.1 721.3,536.9 711.1,535.3"/><polygon points="882.0,534.6 893.2,520.2 907.5,525.8 896.7,539.5"/><polygon points="827.4,547.1 839.7,537.5 855.1,541.9 843.3,551.2"/><polygon points="836.7,317.0 830.4,308.0 843.6,319.5 849.8,328.3"/><polygon points="855.1,541.9 867.1,529.6 882.0,534.6 870.4,546.4"/><polygon points="583.9,451.9 588.3,460.9 595.6,477.2 590.8,467.2"/><polygon points="893.0,388.1 892.1,373.4 904.8,384.1 905.8,398.2"/><polygon points="920.5,468.4 926.2,450.6 939.1,459.2 933.6,476.3"/><polygon points="738.2,540.7 750.0,537.9 766.6,541.7 755.1,544.4"/><polygon points="866.4,351.9 862.8,339.5 875.8,350.7 879.3,362.7"/><polygon points="783.1,545.6 795.4,538.9 811.4,543.1 799.5,549.4"/><polygon points="893.2,520.2 903.6,504.0 917.5,510.3 907.5,525.8"/><polygon points="715.7,247.6 705.5,247.8 722.6,245.9 733.6,245.7"/><polygon points="912.9,486.5 920.5,468.4 933.6,476.3 926.3,493.6"/><polygon points="904.2,414.8 905.8,398.2 918.5,408.4 917.1,424.3"/><polygon points="676.5,527.6 687.1,529.2 704.2,533.1 693.8,531.4"/><polygon points="913.3,441.9 917.1,424.3 929.8,433.7 926.2,450.6"/><polygon points="903.6,504.0 912.9,486.5 926.3,493.6 917.5,510.3"/><polygon points="823.6,305.7 817.1,296.4 830.4,308.0 836.7,317.0"/><polygon points="577.6,436.3 581.5,444.3 588.3,460.9 583.9,451.9"/><polygon points="811.4,543.1 824.1,533.0 839.7,537.5 827.4,547.1"/><polygon points="867.1,529.6 878.8,514.6 893.2,520.2 882.0,534.6"/><polygon points="604.5,492.5 612.5,498.8 625.5,511.3 617.2,504.7"/><polygon points="880.2,377.9 879.3,362.7 892.1,373.4 893.0,388.1"/><polygon points="697.9,251.3 688.7,251.5 705.5,247.8 715.7,247.6"/><polygon points="721.3,536.9 733.3,534.0 750.0,537.9 738.2,540.7"/><polygon points="839.7,537.5 852.1,524.6 867.1,529.6 855.1,541.9"/><polygon points="853.4,341.0 849.8,328.3 862.8,339.5 866.4,351.9"/><polygon points="907.3,460.5 913.3,441.9 926.2,450.6 920.5,468.4"/><polygon points="766.6,541.7 779.3,534.8 795.4,538.9 783.1,545.6"/><polygon points="659.1,523.5 669.9,525.2 687.1,529.2 676.5,527.6"/><polygon points="878.8,514.6 889.7,497.6 903.6,504.0 893.2,520.2"/><polygon points="891.4,405.3 893.0,388.1 905.8,398.2 904.2,414.8"/><polygon points="900.3,433.2 904.2,414.8 917.1,424.3 913.3,441.9"/><polygon points="899.3,479.4 907.3,460.5 920.5,468.4 912.9,486.5"/><polygon points="810.4,294.3 803.8,284.8 817.1,296.4 823.6,305.7"/><polygon points="595.6,477.2 603.0,483.0 612.5,498.8 604.5,492.5"/><polygon points="889.7,497.6 899.3,479.4 912.9,486.5 903.6,504.0"/><polygon points="571.3,420.5 574.7,427.6 581.5,444.3 577.6,436.3"/><polygon points="680.1,255.7 671.9,255.8 688.7,251.5 697.9,251.3"/><polygon points="795.4,538.9 808.6,528.4 824.1,533.0 811.4,543.1"/><polygon points="704.2,533.1 716.6,530.0 733.3,534.0 721.3,536.9"/><polygon points="852.1,524.6 864.3,509.0 878.8,514.6 867.1,529.6"/><polygon points="867.2,367.6 866.4,351.9 879.3,362.7 880.2,377.9"/><polygon points="840.4,330.1 836.7,317.0 849.8,328.3 853.4,341.0"/><polygon points="641.8,518.7 652.8,520.5 669.9,525.2 659.1,523.5"/><polygon points="824.1,533.0 837.1,519.5 852.1,524.6 839.7,537.5"/><polygon points="742.5,250.4 733.6,245.7 751.2,248.7 760.5,253.5"/><polygon points="750.0,537.9 763.1,530.7 779.3,534.8 766.6,541.7"/><polygon points="588.3,460.9 595.0,466.1 603.0,483.0 595.6,477.2"/><polygon points="894.0,452.6 900.3,433.2 913.3,441.9 907.3,460.5"/><polygon points="796.9,283.0 790.2,273.3 803.8,284.8 810.4,294.3"/><polygon points="662.2,260.1 655.0,260.2 671.9,255.8 680.1,255.7"/><polygon points="878.4,395.7 880.2,377.9 893.0,388.1 891.4,405.3"/><polygon points="864.3,509.0 875.6,491.3 889.7,497.6 878.8,514.6"/><polygon points="887.2,424.4 891.4,405.3 904.2,414.8 900.3,433.2"/><polygon points="885.6,472.2 894.0,452.6 907.3,460.5 899.3,479.4"/><polygon points="723.8,251.9 715.7,247.6 733.6,245.7 742.5,250.4"/><polygon points="875.6,491.3 885.6,472.2 899.3,479.4 889.7,497.6"/><polygon points="581.5,444.3 587.4,448.9 595.0,466.1 588.3,460.9"/><polygon points="687.1,529.2 699.8,526.1 716.6,530.0 704.2,533.1"/><polygon points="625.5,511.3 636.5,513.0 652.8,520.5 641.8,518.7"/><polygon points="779.3,534.8 792.9,523.9 808.6,528.4 795.4,538.9"/><polygon points="827.3,319.2 823.6,305.7 836.7,317.0 840.4,330.1"/><polygon points="854.2,357.3 853.4,341.0 866.4,351.9 867.2,367.6"/><polygon points="837.1,519.5 849.7,503.3 864.3,509.0 852.1,524.6"/><polygon points="733.3,534.0 746.8,526.5 763.1,530.7 750.0,537.9"/><polygon points="808.6,528.4 821.9,514.5 837.1,519.5 824.1,533.0"/><polygon points="705.2,255.3 697.9,251.3 715.7,247.6 723.8,251.9"/><polygon points="783.0,272.1 776.2,262.3 790.2,273.3 796.9,283.0"/><polygon points="574.7,427.6 580.0,431.6 587.4,448.9 581.5,444.3"/><polygon points="880.6,444.5 887.2,424.4 900.3,433.2 894.0,452.6"/><polygon points="612.5,498.8 622.9,500.4 636.5,513.0 625.5,511.3"/><polygon points="865.3,386.1 867.2,367.6 880.2,377.9 878.4,395.7"/><polygon points="849.7,503.3 861.5,484.8 875.6,491.3 864.3,509.0"/><polygon points="874.0,415.5 878.4,395.7 891.4,405.3 887.2,424.4"/><polygon points="669.9,525.2 682.9,521.9 699.8,526.1 687.1,529.2"/><polygon points="686.6,259.3 680.1,255.7 697.9,251.3 705.2,255.3"/><polygon points="570.5,422.3 575.6,426.2 580.0,431.6 574.7,427.6"/><polygon points="871.9,465.0 880.6,444.5 894.0,452.6 885.6,472.2"/><polygon points="861.5,484.8 871.9,465.0 885.6,472.2 875.6,491.3"/><polygon points="814.1,308.2 810.4,294.3 823.6,305.7 827.3,319.2"/><polygon points="763.1,530.7 777.1,519.3 792.9,523.9 779.3,534.8"/><polygon points="841.2,346.9 840.4,330.1 853.4,341.0 854.2,357.3"/><polygon points="603.0,483.0 612.6,484.3 622.9,500.4 612.5,498.8"/><polygon points="767.2,263.4 760.5,253.5 776.2,262.3 783.0,272.1"/><polygon points="716.6,530.0 730.5,522.3 746.8,526.5 733.3,534.0"/><polygon points="821.9,514.5 835.0,497.5 849.7,503.3 837.1,519.5"/><polygon points="667.9,263.4 662.2,260.1 680.1,255.7 686.6,259.3"/><polygon points="792.9,523.9 806.7,509.4 821.9,514.5 808.6,528.4"/><polygon points="595.0,466.1 603.7,467.2 612.6,484.3 603.0,483.0"/><polygon points="867.1,436.5 874.0,415.5 887.2,424.4 880.6,444.5"/><polygon points="660.8,263.0 655.3,259.9 662.2,260.1 667.9,263.4"/><polygon points="652.8,520.5 666.0,517.0 682.9,521.9 669.9,525.2"/><polygon points="852.2,376.4 854.2,357.3 867.2,367.6 865.3,386.1"/><polygon points="748.9,259.8 742.5,250.4 760.5,253.5 767.2,263.4"/><polygon points="860.8,406.6 865.3,386.1 878.4,395.7 874.0,415.5"/><polygon points="835.0,497.5 847.2,478.4 861.5,484.8 849.7,503.3"/><polygon points="587.4,448.9 595.3,449.8 603.7,467.2 595.0,466.1"/><polygon points="800.7,297.2 796.9,283.0 810.4,294.3 814.1,308.2"/><polygon points="746.8,526.5 761.2,514.7 777.1,519.3 763.1,530.7"/><polygon points="858.1,457.7 867.1,436.5 880.6,444.5 871.9,465.0"/><polygon points="828.0,336.4 827.3,319.2 840.4,330.1 841.2,346.9"/><polygon points="847.2,478.4 858.1,457.7 871.9,465.0 861.5,484.8"/><polygon points="699.8,526.1 714.0,518.0 730.5,522.3 716.6,530.0"/><polygon points="729.6,260.8 723.8,251.9 742.5,250.4 748.9,259.8"/><polygon points="580.0,431.6 586.9,432.4 595.3,449.8 587.4,448.9"/><polygon points="806.7,509.4 820.3,491.8 835.0,497.5 821.9,514.5"/><polygon points="777.1,519.3 791.4,504.2 806.7,509.4 792.9,523.9"/><polygon points="636.5,513.0 649.6,509.5 666.0,517.0 652.8,520.5"/><polygon points="710.3,263.4 705.2,255.3 723.8,251.9 729.6,260.8"/><polygon points="575.6,426.2 582.3,426.8 586.9,432.4 580.0,431.6"/><polygon points="853.6,428.4 860.8,406.6 874.0,415.5 867.1,436.5"/><polygon points="839.0,366.6 841.2,346.9 854.2,357.3 852.2,376.4"/><polygon points="786.8,286.7 783.0,272.1 796.9,283.0 800.7,297.2"/><polygon points="691.1,266.5 686.6,259.3 705.2,255.3 710.3,263.4"/><polygon points="569.0,424.0 575.7,424.6 582.3,426.8 575.6,426.2"/><polygon points="847.4,397.7 852.2,376.4 865.3,386.1 860.8,406.6"/><polygon points="820.3,491.8 832.9,471.8 847.2,478.4 835.0,497.5"/><polygon points="730.5,522.3 745.3,510.1 761.2,514.7 746.8,526.5"/><polygon points="814.8,326.0 814.1,308.2 827.3,319.2 828.0,336.4"/><polygon points="622.9,500.4 635.5,496.9 649.6,509.5 636.5,513.0"/><polygon points="671.8,269.8 667.9,263.4 686.6,259.3 691.1,266.5"/><polygon points="682.9,521.9 697.5,513.6 714.0,518.0 699.8,526.1"/><polygon points="844.2,450.4 853.6,428.4 867.1,436.5 858.1,457.7"/><polygon points="832.9,471.8 844.2,450.4 858.1,457.7 847.2,478.4"/><polygon points="664.6,269.3 660.8,263.0 667.9,263.4 671.8,269.8"/><polygon points="612.6,484.3 624.2,481.0 635.5,496.9 622.9,500.4"/><polygon points="791.4,504.2 805.4,486.0 820.3,491.8 806.7,509.4"/><polygon points="761.2,514.7 776.0,499.1 791.4,504.2 777.1,519.3"/><polygon points="658.9,265.3 655.1,259.0 660.8,263.0 664.6,269.3"/><polygon points="770.9,277.9 767.2,263.4 783.0,272.1 786.8,286.7"/><polygon points="603.7,467.2 614.2,464.1 624.2,481.0 612.6,484.3"/><polygon points="825.8,356.8 828.0,336.4 841.2,346.9 839.0,366.6"/><polygon points="595.3,449.8 604.7,447.0 614.2,464.1 603.7,467.2"/><polygon points="840.0,420.2 847.4,397.7 860.8,406.6 853.6,428.4"/><polygon points="586.9,432.4 595.2,429.7 604.7,447.0 595.3,449.8"/><polygon points="666.0,517.0 680.8,508.5 697.5,513.6 682.9,521.9"/><polygon points="801.4,315.5 800.7,297.2 814.1,308.2 814.8,326.0"/><polygon points="714.0,518.0 729.3,505.4 745.3,510.1 730.5,522.3"/><polygon points="834.0,388.6 839.0,366.6 852.2,376.4 847.4,397.7"/><polygon points="582.3,426.8 590.3,424.3 595.2,429.7 586.9,432.4"/><polygon points="805.4,486.0 818.5,465.3 832.9,471.8 820.3,491.8"/><polygon points="752.3,273.8 748.9,259.8 767.2,263.4 770.9,277.9"/><polygon points="830.2,443.1 840.0,420.2 853.6,428.4 844.2,450.4"/><polygon points="818.5,465.3 830.2,443.1 844.2,450.4 832.9,471.8"/><polygon points="575.7,424.6 583.8,422.0 590.3,424.3 582.3,426.8"/><polygon points="732.7,273.8 729.6,260.8 748.9,259.8 752.3,273.8"/><polygon points="745.3,510.1 760.5,493.9 776.0,499.1 761.2,514.7"/><polygon points="713.0,275.2 710.3,263.4 729.6,260.8 732.7,273.8"/><polygon points="776.0,499.1 790.5,480.1 805.4,486.0 791.4,504.2"/><polygon points="693.4,277.2 691.1,266.5 710.3,263.4 713.0,275.2"/><polygon points="673.8,279.3 671.8,269.8 691.1,266.5 693.4,277.2"/><polygon points="569.1,426.4 577.6,423.7 583.8,422.0 575.7,424.6"/><polygon points="649.6,509.5 664.4,500.9 680.8,508.5 666.0,517.0"/><polygon points="812.4,347.0 814.8,326.0 828.0,336.4 825.8,356.8"/><polygon points="666.5,278.5 664.6,269.3 671.8,269.8 673.8,279.3"/><polygon points="826.3,412.0 834.0,388.6 847.4,397.7 840.0,420.2"/><polygon points="787.3,305.3 786.8,286.7 800.7,297.2 801.4,315.5"/><polygon points="697.5,513.6 713.1,500.5 729.3,505.4 714.0,518.0"/><polygon points="660.8,274.6 658.9,265.3 664.6,269.3 666.5,278.5"/><polygon points="820.5,379.6 825.8,356.8 839.0,366.6 834.0,388.6"/><polygon points="790.5,480.1 804.0,458.7 818.5,465.3 805.4,486.0"/><polygon points="635.5,496.9 649.7,488.5 664.4,500.9 649.6,509.5"/><polygon points="816.1,435.7 826.3,412.0 840.0,420.2 830.2,443.1"/><polygon points="804.0,458.7 816.1,435.7 830.2,443.1 818.5,465.3"/><polygon points="658.5,268.8 656.5,259.1 658.9,265.3 660.8,274.6"/><polygon points="624.2,481.0 637.3,473.1 649.7,488.5 635.5,496.9"/><polygon points="595.2,429.7 604.6,423.8 615.3,440.4 604.7,447.0"/><polygon points="614.2,464.1 626.1,456.9 637.3,473.1 624.2,481.0"/><polygon points="604.7,447.0 615.3,440.4 626.1,456.9 614.2,464.1"/><polygon points="590.3,424.3 599.4,418.5 604.6,423.8 595.2,429.7"/><polygon points="729.3,505.4 744.9,488.6 760.5,493.9 745.3,510.1"/><polygon points="760.5,493.9 775.4,474.3 790.5,480.1 776.0,499.1"/><polygon points="771.4,296.7 770.9,277.9 786.8,286.7 787.3,305.3"/><polygon points="798.8,337.2 801.4,315.5 814.8,326.0 812.4,347.0"/><polygon points="583.8,422.0 592.9,416.2 599.4,418.5 590.3,424.3"/><polygon points="680.8,508.5 696.8,495.1 713.1,500.5 697.5,513.6"/><polygon points="812.5,403.7 820.5,379.6 834.0,388.6 826.3,412.0"/><polygon points="806.9,370.5 812.4,347.0 825.8,356.8 820.5,379.6"/><polygon points="666.4,290.2 666.5,278.5 673.8,279.3 673.8,291.4"/><polygon points="673.8,291.4 673.8,279.3 693.4,277.2 693.5,290.9"/><polygon points="752.7,291.8 752.3,273.8 770.9,277.9 771.4,296.7"/><polygon points="577.6,423.7 587.2,417.6 592.9,416.2 583.8,422.0"/><polygon points="693.5,290.9 693.4,277.2 713.0,275.2 713.2,290.5"/><polygon points="775.4,474.3 789.4,452.1 804.0,458.7 790.5,480.1"/><polygon points="349.9,199.3 344.3,210.1 339.0,208.6 346.4,194.5"/><polygon points="732.9,290.5 732.7,273.8 752.3,273.8 752.7,291.8"/><polygon points="713.2,290.5 713.0,275.2 732.7,273.8 732.9,290.5"/><polygon points="344.3,210.1 339.4,221.0 332.6,223.0 339.0,208.6"/><polygon points="660.7,286.5 660.8,274.6 666.5,278.5 666.4,290.2"/><polygon points="802.0,428.2 812.5,403.7 826.3,412.0 816.1,435.7"/><polygon points="789.4,452.1 802.0,428.2 816.1,435.7 804.0,458.7"/><polygon points="355.9,189.1 349.9,199.3 346.4,194.5 354.2,181.1"/><polygon points="713.1,500.5 729.2,483.2 744.9,488.6 729.3,505.4"/><polygon points="744.9,488.6 760.3,468.3 775.4,474.3 760.5,493.9"/><polygon points="339.4,221.0 335.3,231.7 327.1,237.1 332.6,223.0"/><polygon points="784.7,327.5 787.3,305.3 801.4,315.5 798.8,337.2"/><polygon points="664.4,500.9 680.3,487.4 696.8,495.1 680.8,508.5"/><polygon points="599.4,418.5 609.1,409.7 614.7,414.8 604.6,423.8"/><polygon points="658.4,281.3 658.5,268.8 660.8,274.6 660.7,286.5"/><polygon points="604.6,423.8 614.7,414.8 626.8,430.2 615.3,440.4"/><polygon points="362.1,179.9 355.9,189.1 354.2,181.1 362.4,169.0"/><polygon points="798.6,395.4 806.9,370.5 820.5,379.6 812.5,403.7"/><polygon points="592.9,416.2 602.8,407.3 609.1,409.7 599.4,418.5"/><polygon points="615.3,440.4 626.8,430.2 638.9,445.7 626.1,456.9"/><polygon points="793.1,361.3 798.8,337.2 812.4,347.0 806.9,370.5"/><polygon points="649.7,488.5 664.9,475.4 680.3,487.4 664.4,500.9"/><polygon points="626.1,456.9 638.9,445.7 651.4,460.9 637.3,473.1"/><polygon points="335.3,231.7 332.1,241.8 323.0,250.3 327.1,237.1"/><polygon points="637.3,473.1 651.4,460.9 664.9,475.4 649.7,488.5"/><polygon points="664.3,304.1 666.4,290.2 673.8,291.4 671.7,305.8"/><polygon points="561.7,432.5 572.8,425.4 587.2,417.6 577.6,423.7"/><polygon points="760.3,468.3 774.8,445.4 789.4,452.1 775.4,474.3"/><polygon points="671.7,305.8 673.8,291.4 693.5,290.9 691.1,307.1"/><polygon points="630.8,187.8 624.8,178.1 635.4,195.1 641.0,204.3"/><polygon points="587.2,417.6 597.5,408.3 602.8,407.3 592.9,416.2"/><polygon points="787.7,420.7 798.6,395.4 812.5,403.7 802.0,428.2"/><polygon points="696.8,495.1 713.2,477.3 729.2,483.2 713.1,500.5"/><polygon points="768.6,318.9 771.4,296.7 787.3,305.3 784.7,327.5"/><polygon points="658.6,300.5 660.7,286.5 666.4,290.2 664.3,304.1"/><polygon points="368.3,171.9 362.1,179.9 362.4,169.0 370.6,158.5"/><polygon points="774.8,445.4 787.7,420.7 802.0,428.2 789.4,452.1"/><polygon points="651.3,234.5 648.8,221.9 653.9,240.2 656.2,251.5"/><polygon points="691.1,307.1 693.5,290.9 713.2,290.5 710.7,308.5"/><polygon points="729.2,483.2 745.0,462.3 760.3,468.3 744.9,488.6"/><polygon points="514.5,446.8 526.4,443.0 544.5,439.0 533.6,442.5"/><polygon points="609.1,409.7 619.2,398.3 625.1,403.0 614.7,414.8"/><polygon points="353.0,203.5 349.0,211.3 344.3,210.1 349.9,199.3"/><polygon points="349.0,211.3 345.4,219.2 339.4,221.0 344.3,210.1"/><polygon points="710.7,308.5 713.2,290.5 732.9,290.5 730.3,310.3"/><polygon points="749.9,313.2 752.7,291.8 771.4,296.7 768.6,318.9"/><polygon points="332.1,241.8 330.1,250.9 320.3,262.3 323.0,250.3"/><polygon points="357.3,196.2 353.0,203.5 349.9,199.3 355.9,189.1"/><polygon points="614.7,414.8 625.1,403.0 638.6,417.0 626.8,430.2"/><polygon points="656.1,266.0 656.2,251.5 658.5,268.8 658.4,281.3"/><polygon points="730.3,310.3 732.9,290.5 752.7,291.8 749.9,313.2"/><polygon points="656.2,296.0 658.4,281.3 660.7,286.5 658.6,300.5"/><polygon points="444.5,442.4 455.5,443.8 475.1,447.4 464.4,446.1"/><polygon points="602.8,407.3 613.0,395.8 619.2,398.3 609.1,409.7"/><polygon points="784.5,387.0 793.1,361.3 806.9,370.5 798.6,395.4"/><polygon points="778.8,352.2 784.7,327.5 798.8,337.2 793.1,361.3"/><polygon points="345.4,219.2 342.4,227.0 335.3,231.7 339.4,221.0"/><polygon points="660.3,319.6 664.3,304.1 671.7,305.8 667.6,321.8"/><polygon points="361.8,189.5 357.3,196.2 355.9,189.1 362.1,179.9"/><polygon points="680.3,487.4 696.8,469.4 713.2,477.3 696.8,495.1"/><polygon points="626.8,430.2 638.6,417.0 652.1,430.9 638.9,445.7"/><polygon points="374.2,165.6 368.3,171.9 370.6,158.5 378.4,150.1"/><polygon points="745.0,462.3 759.9,438.6 774.8,445.4 760.3,468.3"/><polygon points="618.3,172.7 612.1,162.6 624.8,178.1 630.8,187.8"/><polygon points="654.6,316.2 658.6,300.5 664.3,304.1 660.3,319.6"/><polygon points="667.6,321.8 671.7,305.8 691.1,307.1 686.6,325.2"/><polygon points="342.4,227.0 340.2,234.2 332.1,241.8 335.3,231.7"/><polygon points="619.2,398.3 629.2,384.6 635.4,388.9 625.1,403.0"/><polygon points="597.5,408.3 608.2,396.1 613.0,395.8 602.8,407.3"/><polygon points="773.3,413.1 784.5,387.0 798.6,395.4 787.7,420.7"/><polygon points="544.5,439.0 557.0,431.0 572.8,425.4 561.7,432.5"/><polygon points="638.9,445.7 652.1,430.9 666.0,444.8 651.4,460.9"/><polygon points="759.9,438.6 773.3,413.1 787.7,420.7 774.8,445.4"/><polygon points="713.2,477.3 729.4,455.8 745.0,462.3 729.2,483.2"/><polygon points="664.9,475.4 680.7,458.1 696.8,469.4 680.3,487.4"/><polygon points="643.8,218.0 641.0,204.3 648.8,221.9 651.3,234.5"/><polygon points="366.3,183.8 361.8,189.5 362.1,179.9 368.3,171.9"/><polygon points="572.8,425.4 584.9,414.5 597.5,408.3 587.2,417.6"/><polygon points="494.9,448.5 507.6,444.3 526.4,443.0 514.5,446.8"/><polygon points="651.4,460.9 666.0,444.8 680.7,458.1 664.9,475.4"/><polygon points="654.6,336.1 660.3,319.6 667.6,321.8 661.6,338.8"/><polygon points="613.0,395.8 623.1,381.9 629.2,384.6 619.2,398.3"/><polygon points="686.6,325.2 691.1,307.1 710.7,308.5 705.6,328.7"/><polygon points="330.1,250.9 329.2,258.6 319.1,272.5 320.3,262.3"/><polygon points="625.1,403.0 635.4,388.9 650.3,401.1 638.6,417.0"/><polygon points="425.3,436.1 436.3,437.4 455.5,443.8 444.5,442.4"/><polygon points="543.6,120.4 534.7,115.9 553.7,123.0 562.9,127.6"/><polygon points="762.7,343.7 768.6,318.9 784.7,327.5 778.8,352.2"/><polygon points="651.9,312.5 656.2,296.0 658.6,300.5 654.6,316.2"/><polygon points="323.9,318.8 326.8,327.0 333.3,346.3 330.1,337.0"/><polygon points="629.2,384.6 638.7,369.3 645.2,373.1 635.4,388.9"/><polygon points="340.2,234.2 338.7,240.8 330.1,250.9 332.1,241.8"/><polygon points="648.7,332.8 654.6,316.2 660.3,319.6 654.6,336.1"/><polygon points="353.6,381.1 360.5,387.3 374.3,402.7 367.0,396.1"/><polygon points="319.1,272.5 319.5,280.6 320.4,300.0 319.9,290.0"/><polygon points="769.9,378.6 778.8,352.2 793.1,361.3 784.5,387.0"/><polygon points="647.2,352.9 654.6,336.1 661.6,338.8 654.1,356.1"/><polygon points="661.6,338.8 667.6,321.8 686.6,325.2 679.9,344.4"/><polygon points="638.7,369.3 647.2,352.9 654.1,356.1 645.2,373.1"/><polygon points="355.7,207.2 353.0,212.4 349.0,211.3 353.0,203.5"/><polygon points="705.6,328.7 710.7,308.5 730.3,310.3 724.8,332.5"/><polygon points="353.0,212.4 350.6,217.7 345.4,219.2 349.0,211.3"/><polygon points="453.8,114.0 445.2,115.0 464.6,111.6 474.1,110.5"/><polygon points="358.6,202.2 355.7,207.2 353.0,203.5 357.3,196.2"/><polygon points="623.1,381.9 632.6,366.4 638.7,369.3 629.2,384.6"/><polygon points="638.6,417.0 650.3,401.1 665.2,413.2 652.1,430.9"/><polygon points="379.7,161.0 374.2,165.6 378.4,150.1 385.6,144.1"/><polygon points="603.7,159.2 597.4,148.8 612.1,162.6 618.3,172.7"/><polygon points="744.1,337.1 749.9,313.2 768.6,318.9 762.7,343.7"/><polygon points="370.6,179.2 366.3,183.8 368.3,171.9 374.2,165.6"/><polygon points="608.2,396.1 618.8,381.6 623.1,381.9 613.0,395.8"/><polygon points="724.8,332.5 730.3,310.3 749.9,313.2 744.1,337.1"/><polygon points="350.6,217.7 348.6,222.9 342.4,227.0 345.4,219.2"/><polygon points="653.5,283.2 656.1,266.0 658.4,281.3 656.2,296.0"/><polygon points="635.4,388.9 645.2,373.1 661.3,383.2 650.3,401.1"/><polygon points="641.3,349.8 648.7,332.8 654.6,336.1 647.2,352.9"/><polygon points="651.1,250.8 651.3,234.5 656.2,251.5 656.1,266.0"/><polygon points="632.6,366.4 641.3,349.8 647.2,352.9 638.7,369.3"/><polygon points="729.4,455.8 744.6,431.5 759.9,438.6 745.0,462.3"/><polygon points="361.6,197.7 358.6,202.2 357.3,196.2 361.8,189.5"/><polygon points="654.1,356.1 661.6,338.8 679.9,344.4 671.3,364.0"/><polygon points="696.8,469.4 713.0,447.8 729.4,455.8 713.2,477.3"/><polygon points="645.2,373.1 654.1,356.1 671.3,364.0 661.3,383.2"/><polygon points="758.3,405.4 769.9,378.6 784.5,387.0 773.3,413.1"/><polygon points="679.9,344.4 686.6,325.2 705.6,328.7 698.2,350.2"/><polygon points="645.7,330.0 651.9,312.5 654.6,316.2 648.7,332.8"/><polygon points="348.6,222.9 347.1,227.8 340.2,234.2 342.4,227.0"/><polygon points="523.4,115.8 514.9,111.4 534.7,115.9 543.6,120.4"/><polygon points="744.6,431.5 758.3,405.4 773.3,413.1 759.9,438.6"/><polygon points="652.1,430.9 665.2,413.2 680.4,425.4 666.0,444.8"/><polygon points="407.0,427.3 417.9,428.6 436.3,437.4 425.3,436.1"/><polygon points="338.7,240.8 338.1,246.4 329.2,258.6 330.1,250.9"/><polygon points="392.0,140.7 385.6,144.1 400.8,133.8 408.6,129.7"/><polygon points="320.4,300.0 322.8,306.9 326.8,327.0 323.9,318.8"/><polygon points="342.3,364.4 348.7,370.0 360.5,387.3 353.6,381.1"/><polygon points="475.1,447.4 488.4,443.1 507.6,444.3 494.9,448.5"/><polygon points="364.6,193.9 361.6,197.7 361.8,189.5 366.3,183.8"/><polygon points="618.8,381.6 628.8,365.3 632.6,366.4 623.1,381.9"/><polygon points="329.2,258.6 329.5,264.7 319.5,280.6 319.1,272.5"/><polygon points="526.4,443.0 540.0,434.2 557.0,431.0 544.5,439.0"/><polygon points="650.3,401.1 661.3,383.2 677.6,393.3 665.2,413.2"/><polygon points="633.7,202.5 630.8,187.8 641.0,204.3 643.8,218.0"/><polygon points="680.7,458.1 696.2,437.3 713.0,447.8 696.8,469.4"/><polygon points="666.0,444.8 680.4,425.4 696.2,437.3 680.7,458.1"/><polygon points="434.0,120.2 426.4,121.1 445.2,115.0 453.8,114.0"/><polygon points="753.7,370.2 762.7,343.7 778.8,352.2 769.9,378.6"/><polygon points="638.0,347.8 645.7,330.0 648.7,332.8 641.3,349.8"/><polygon points="584.9,414.5 597.3,400.3 608.2,396.1 597.5,408.3"/><polygon points="628.8,365.3 638.0,347.8 641.3,349.8 632.6,366.4"/><polygon points="347.1,227.8 346.1,232.2 338.7,240.8 340.2,234.2"/><polygon points="671.3,364.0 679.9,344.4 698.2,350.2 688.7,372.0"/><polygon points="698.2,350.2 705.6,328.7 724.8,332.5 716.7,356.1"/><polygon points="374.6,175.9 370.6,179.2 374.2,165.6 379.7,161.0"/><polygon points="661.3,383.2 671.3,364.0 688.7,372.0 677.6,393.3"/><polygon points="587.2,147.6 580.9,137.1 597.4,148.8 603.7,159.2"/><polygon points="367.5,190.8 364.6,193.9 366.3,183.8 370.6,179.2"/><polygon points="557.0,431.0 570.6,418.7 584.9,414.5 572.8,425.4"/><polygon points="713.0,447.8 728.3,423.3 744.6,431.5 729.4,455.8"/><polygon points="357.9,210.1 356.3,213.3 353.0,212.4 355.7,207.2"/><polygon points="735.4,362.5 744.1,337.1 762.7,343.7 753.7,370.2"/><polygon points="356.3,213.3 354.8,216.4 350.6,217.7 353.0,212.4"/><polygon points="716.7,356.1 724.8,332.5 744.1,337.1 735.4,362.5"/><polygon points="665.2,413.2 677.6,393.3 694.0,403.5 680.4,425.4"/><polygon points="502.5,113.7 494.6,109.6 514.9,111.4 523.4,115.8"/><polygon points="359.6,207.2 357.9,210.1 355.7,207.2 358.6,202.2"/><polygon points="384.5,158.5 379.7,161.0 385.6,144.1 392.0,140.7"/><polygon points="354.8,216.4 353.6,219.5 348.6,222.9 350.6,217.7"/><polygon points="389.9,416.1 400.5,417.3 417.9,428.6 407.0,427.3"/><polygon points="333.3,346.3 339.1,351.3 348.7,370.0 342.3,364.4"/><polygon points="648.5,302.4 653.5,283.2 656.2,296.0 651.9,312.5"/><polygon points="338.1,246.4 338.3,250.7 329.5,264.7 329.2,258.6"/><polygon points="742.0,397.1 753.7,370.2 769.9,378.6 758.3,405.4"/><polygon points="346.1,232.2 345.7,235.9 338.1,246.4 338.7,240.8"/><polygon points="688.7,372.0 698.2,350.2 716.7,356.1 706.3,380.1"/><polygon points="361.4,204.5 359.6,207.2 358.6,202.2 361.6,197.7"/><polygon points="728.3,423.3 742.0,397.1 758.3,405.4 744.6,431.5"/><polygon points="319.5,280.6 321.5,286.3 322.8,306.9 320.4,300.0"/><polygon points="677.6,393.3 688.7,372.0 706.3,380.1 694.0,403.5"/><polygon points="353.6,219.5 352.7,222.5 347.1,227.8 348.6,222.9"/><polygon points="415.0,129.0 408.6,129.7 426.4,121.1 434.0,120.2"/><polygon points="680.4,425.4 694.0,403.5 710.9,413.7 696.2,437.3"/><polygon points="696.2,437.3 710.9,413.7 728.3,423.3 713.0,447.8"/><polygon points="363.2,202.2 361.4,204.5 361.6,197.7 364.6,193.9"/><polygon points="370.1,188.7 367.5,190.8 370.6,179.2 374.6,175.9"/><polygon points="643.5,235.9 643.8,218.0 651.3,234.5 651.1,250.8"/><polygon points="455.5,443.8 469.0,439.2 488.4,443.1 475.1,447.4"/><polygon points="706.3,380.1 716.7,356.1 735.4,362.5 724.2,388.4"/><polygon points="724.2,388.4 735.4,362.5 753.7,370.2 742.0,397.1"/><polygon points="352.7,222.5 352.1,225.1 346.1,232.2 347.1,227.8"/><polygon points="378.0,174.2 374.6,175.9 379.7,161.0 384.5,158.5"/><polygon points="694.0,403.5 706.3,380.1 724.2,388.4 710.9,413.7"/><polygon points="710.9,413.7 724.2,388.4 742.0,397.1 728.3,423.3"/><polygon points="597.3,400.3 609.7,383.3 618.8,381.6 608.2,396.1"/><polygon points="364.9,200.4 363.2,202.2 364.6,193.9 367.5,190.8"/><polygon points="329.5,264.7 331.1,268.9 321.5,286.3 319.5,280.6"/><polygon points="621.3,188.1 618.3,172.7 630.8,187.8 633.7,202.5"/><polygon points="648.2,270.1 651.1,250.8 656.1,266.0 653.5,283.2"/><polygon points="345.7,235.9 345.9,238.8 338.3,250.7 338.1,246.4"/><polygon points="481.4,114.3 474.1,110.5 494.6,109.6 502.5,113.7"/><polygon points="569.0,138.0 562.9,127.6 580.9,137.1 587.2,147.6"/><polygon points="326.8,327.0 331.9,331.4 339.1,351.3 333.3,346.3"/><polygon points="507.6,444.3 522.1,434.9 540.0,434.2 526.4,443.0"/><polygon points="352.1,225.1 351.9,227.3 345.7,235.9 346.1,232.2"/><polygon points="374.3,402.7 384.4,403.7 400.5,417.3 389.9,416.1"/><polygon points="359.6,212.4 358.8,213.9 356.3,213.3 357.9,210.1"/><polygon points="358.8,213.9 358.1,215.5 354.8,216.4 356.3,213.3"/><polygon points="360.4,211.0 359.6,212.4 357.9,210.1 359.6,207.2"/><polygon points="641.3,322.9 648.5,302.4 651.9,312.5 645.7,330.0"/><polygon points="397.2,140.2 392.0,140.7 408.6,129.7 415.0,129.0"/><polygon points="358.1,215.5 357.5,217.0 353.6,219.5 354.8,216.4"/><polygon points="372.4,187.5 370.1,188.7 374.6,175.9 378.0,174.2"/><polygon points="366.5,199.1 364.9,200.4 367.5,190.8 370.1,188.7"/><polygon points="361.3,209.7 360.4,211.0 359.6,207.2 361.4,204.5"/><polygon points="338.3,250.7 339.5,253.7 331.1,268.9 329.5,264.7"/><polygon points="357.5,217.0 357.1,218.4 352.7,222.5 353.6,219.5"/><polygon points="362.1,208.6 361.3,209.7 361.4,204.5 363.2,202.2"/><polygon points="351.9,227.3 352.0,229.0 345.9,238.8 345.7,235.9"/><polygon points="357.1,218.4 356.8,219.7 352.1,225.1 352.7,222.5"/><polygon points="609.7,383.3 621.5,364.2 628.8,365.3 618.8,381.6"/><polygon points="363.0,207.7 362.1,208.6 363.2,202.2 364.9,200.4"/><polygon points="388.4,158.2 384.5,158.5 392.0,140.7 397.2,140.2"/><polygon points="345.9,238.8 346.6,240.8 339.5,253.7 338.3,250.7"/><polygon points="460.4,117.5 453.8,114.0 474.1,110.5 481.4,114.3"/><polygon points="367.9,198.4 366.5,199.1 370.1,188.7 372.4,187.5"/><polygon points="322.8,306.9 327.1,310.5 331.9,331.4 326.8,327.0"/><polygon points="356.8,219.7 356.7,220.7 351.9,227.3 352.1,225.1"/><polygon points="632.1,343.8 641.3,322.9 645.7,330.0 638.0,347.8"/><polygon points="621.5,364.2 632.1,343.8 638.0,347.8 628.8,365.3"/><polygon points="363.7,207.1 363.0,207.7 364.9,200.4 366.5,199.1"/><polygon points="380.8,174.0 378.0,174.2 384.5,158.5 388.4,158.2"/><polygon points="570.6,418.7 584.6,402.7 597.3,400.3 584.9,414.5"/><polygon points="436.3,437.4 449.9,432.8 469.0,439.2 455.5,443.8"/><polygon points="540.0,434.2 554.8,420.7 570.6,418.7 557.0,431.0"/><polygon points="356.7,220.7 356.7,221.6 352.0,229.0 351.9,227.3"/><polygon points="352.0,229.0 352.5,230.2 346.6,240.8 345.9,238.8"/><polygon points="549.5,130.6 543.6,120.4 562.9,127.6 569.0,138.0"/><polygon points="360.7,214.0 360.5,214.4 358.8,213.9 359.6,212.4"/><polygon points="360.5,214.4 360.3,214.8 358.1,215.5 358.8,213.9"/><polygon points="360.5,387.3 370.1,388.1 384.4,403.7 374.3,402.7"/><polygon points="360.9,213.6 360.7,214.0 359.6,212.4 360.4,211.0"/><polygon points="360.3,214.8 360.1,215.3 357.5,217.0 358.1,215.5"/><polygon points="374.3,187.4 372.4,187.5 378.0,174.2 380.8,174.0"/><polygon points="361.2,213.2 360.9,213.6 360.4,211.0 361.3,209.7"/><polygon points="360.1,215.3 360.0,215.7 357.1,218.4 357.5,217.0"/><polygon points="364.4,206.8 363.7,207.1 366.5,199.1 367.9,198.4"/><polygon points="361.4,212.9 361.2,213.2 361.3,209.7 362.1,208.6"/><polygon points="360.0,215.7 359.9,216.0 356.8,219.7 357.1,218.4"/><polygon points="361.7,212.6 361.4,212.9 362.1,208.6 363.0,207.7"/><polygon points="359.9,216.0 359.9,216.3 356.7,220.7 356.8,219.7"/><polygon points="369.0,198.4 367.9,198.4 372.4,187.5 374.3,187.4"/><polygon points="356.7,221.6 357.0,222.1 352.5,230.2 352.0,229.0"/><polygon points="361.9,212.4 361.7,212.6 363.0,207.7 363.7,207.1"/><polygon points="359.9,216.3 359.9,216.6 356.7,221.6 356.7,220.7"/><polygon points="606.7,175.0 603.7,159.2 618.3,172.7 621.3,188.1"/><polygon points="362.1,212.3 361.9,212.4 363.7,207.1 364.4,206.8"/><polygon points="364.9,206.8 364.4,206.8 367.9,198.4 369.0,198.4"/><polygon points="321.5,286.3 325.0,289.2 327.1,310.5 322.8,306.9"/><polygon points="439.7,123.4 434.0,120.2 453.8,114.0 460.4,117.5"/><polygon points="359.9,216.6 359.9,216.7 357.0,222.1 356.7,221.6"/><polygon points="633.4,221.6 633.7,202.5 643.8,218.0 643.5,235.9"/><polygon points="361.1,214.6 361.1,214.6 360.5,214.4 360.7,214.0"/><polygon points="361.1,214.6 361.1,214.6 360.3,214.8 360.5,214.4"/><polygon points="361.1,214.6 361.1,214.6 360.7,214.0 360.9,213.6"/><polygon points="361.1,214.6 361.1,214.6 360.1,215.3 360.3,214.8"/><polygon points="361.1,214.6 361.1,214.6 360.9,213.6 361.2,213.2"/><polygon points="361.1,214.6 361.1,214.6 360.0,215.7 360.1,215.3"/><polygon points="361.1,214.6 361.1,214.6 361.2,213.2 361.4,212.9"/><polygon points="362.2,212.3 362.1,212.3 364.4,206.8 364.9,206.8"/><polygon points="361.1,214.6 361.1,214.6 359.9,216.0 360.0,215.7"/><polygon points="361.1,214.6 361.1,214.6 361.4,212.9 361.7,212.6"/><polygon points="361.1,214.6 361.1,214.6 359.9,216.3 359.9,216.0"/><polygon points="361.1,214.6 361.1,214.6 361.7,212.6 361.9,212.4"/><polygon points="361.1,214.6 361.1,214.6 359.9,216.6 359.9,216.3"/><polygon points="361.1,214.6 361.1,214.6 361.9,212.4 362.1,212.3"/><polygon points="361.1,214.6 361.1,214.6 359.9,216.7 359.9,216.6"/><polygon points="361.1,214.6 361.1,214.6 362.1,212.3 362.2,212.3"/><polygon points="361.1,214.6 361.1,214.6 360.1,216.8 359.9,216.7"/><polygon points="359.9,216.7 360.1,216.8 357.4,222.4 357.0,222.1"/><polygon points="357.0,222.1 357.4,222.4 353.3,230.8 352.5,230.2"/><polygon points="361.1,214.6 361.1,214.6 362.2,212.3 362.3,212.4"/><polygon points="352.5,230.2 353.3,230.8 348.0,241.8 346.6,240.8"/><polygon points="346.6,240.8 348.0,241.8 341.4,255.3 339.5,253.7"/><polygon points="361.1,214.6 361.1,214.6 360.2,216.8 360.1,216.8"/><polygon points="339.5,253.7 341.4,255.3 333.8,271.1 331.1,268.9"/><polygon points="331.1,268.9 333.8,271.1 325.0,289.2 321.5,286.3"/><polygon points="361.1,214.6 361.1,214.6 362.3,212.4 362.4,212.6"/><polygon points="361.1,214.6 361.1,214.6 360.4,216.7 360.2,216.8"/><polygon points="362.3,212.4 362.2,212.3 364.9,206.8 365.3,207.0"/><polygon points="642.5,291.9 648.2,270.1 653.5,283.2 648.5,302.4"/><polygon points="361.1,214.6 361.1,214.6 362.4,212.6 362.4,212.8"/><polygon points="361.1,214.6 361.1,214.6 360.6,216.6 360.4,216.7"/><polygon points="361.1,214.6 361.1,214.6 362.4,212.8 362.4,213.1"/><polygon points="488.4,443.1 503.5,433.1 522.1,434.9 507.6,444.3"/><polygon points="361.1,214.6 361.1,214.6 360.9,216.3 360.6,216.6"/><polygon points="361.1,214.6 361.1,214.6 362.4,213.1 362.3,213.5"/><polygon points="360.1,216.8 360.2,216.8 357.9,222.4 357.4,222.4"/><polygon points="361.1,214.6 361.1,214.6 361.1,216.0 360.9,216.3"/><polygon points="365.3,207.0 364.9,206.8 369.0,198.4 369.8,198.9"/><polygon points="361.1,214.6 361.1,214.6 362.3,213.5 362.2,213.9"/><polygon points="361.1,214.6 361.1,214.6 361.4,215.6 361.1,216.0"/><polygon points="361.1,214.6 361.1,214.6 362.2,213.9 362.0,214.3"/><polygon points="361.1,214.6 361.1,214.6 361.6,215.2 361.4,215.6"/><polygon points="361.1,214.6 361.1,214.6 362.0,214.3 361.8,214.8"/><polygon points="361.1,214.6 361.1,214.6 361.8,214.8 361.6,215.2"/><polygon points="362.4,212.6 362.3,212.4 365.3,207.0 365.5,207.6"/><polygon points="348.7,370.0 357.5,370.7 370.1,388.1 360.5,387.3"/><polygon points="369.8,198.9 369.0,198.4 374.3,187.4 375.7,188.3"/><polygon points="360.2,216.8 360.4,216.7 358.5,222.1 357.9,222.4"/><polygon points="357.4,222.4 357.9,222.4 354.4,230.8 353.3,230.8"/><polygon points="419.8,131.7 415.0,129.0 434.0,120.2 439.7,123.4"/><polygon points="362.4,212.8 362.4,212.6 365.5,207.6 365.6,208.4"/><polygon points="529.0,125.6 523.4,115.8 543.6,120.4 549.5,130.6"/><polygon points="360.4,216.7 360.6,216.6 359.3,221.4 358.5,222.1"/><polygon points="375.7,188.3 374.3,187.4 380.8,174.0 382.9,175.3"/><polygon points="640.2,257.1 643.5,235.9 651.1,250.8 648.2,270.1"/><polygon points="417.9,428.6 431.4,423.8 449.9,432.8 436.3,437.4"/><polygon points="362.4,213.1 362.4,212.8 365.6,208.4 365.5,209.5"/><polygon points="365.5,207.6 365.3,207.0 369.8,198.9 370.3,200.1"/><polygon points="360.6,216.6 360.9,216.3 360.1,220.6 359.3,221.4"/><polygon points="353.3,230.8 354.4,230.8 349.8,241.8 348.0,241.8"/><polygon points="362.3,213.5 362.4,213.1 365.5,209.5 365.2,210.8"/><polygon points="382.9,175.3 380.8,174.0 388.4,158.2 391.3,160.0"/><polygon points="360.9,216.3 361.1,216.0 361.0,219.5 360.1,220.6"/><polygon points="357.9,222.4 358.5,222.1 355.8,230.1 354.4,230.8"/><polygon points="362.2,213.9 362.3,213.5 365.2,210.8 364.8,212.2"/><polygon points="584.6,402.7 598.6,383.4 609.7,383.3 597.3,400.3"/><polygon points="361.1,216.0 361.4,215.6 361.9,218.2 361.0,219.5"/><polygon points="401.0,142.5 397.2,140.2 415.0,129.0 419.8,131.7"/><polygon points="362.0,214.3 362.2,213.9 364.8,212.2 364.2,213.7"/><polygon points="361.4,215.6 361.6,215.2 362.7,216.7 361.9,218.2"/><polygon points="361.8,214.8 362.0,214.3 364.2,213.7 363.5,215.2"/><polygon points="361.6,215.2 361.8,214.8 363.5,215.2 362.7,216.7"/><polygon points="339.1,351.3 347.1,351.8 357.5,370.7 348.7,370.0"/><polygon points="365.6,208.4 365.5,207.6 370.3,200.1 370.4,201.8"/><polygon points="391.3,160.0 388.4,158.2 397.2,140.2 401.0,142.5"/><polygon points="370.3,200.1 369.8,198.9 375.7,188.3 376.5,190.2"/><polygon points="348.0,241.8 349.8,241.8 344.2,255.2 341.4,255.3"/><polygon points="358.5,222.1 359.3,221.4 357.3,228.8 355.8,230.1"/><polygon points="590.1,163.6 587.2,147.6 603.7,159.2 606.7,175.0"/><polygon points="365.5,209.5 365.6,208.4 370.4,201.8 370.2,204.0"/><polygon points="507.7,123.1 502.5,113.7 523.4,115.8 529.0,125.6"/><polygon points="634.3,315.0 642.5,291.9 648.5,302.4 641.3,322.9"/><polygon points="354.4,230.8 355.8,230.1 352.1,240.7 349.8,241.8"/><polygon points="359.3,221.4 360.1,220.6 359.1,227.0 357.3,228.8"/><polygon points="522.1,434.9 537.9,420.4 554.8,420.7 540.0,434.2"/><polygon points="331.9,331.4 339.0,331.7 347.1,351.8 339.1,351.3"/><polygon points="341.4,255.3 344.2,255.2 337.6,271.1 333.8,271.1"/><polygon points="376.5,190.2 375.7,188.3 382.9,175.3 384.1,178.2"/><polygon points="365.2,210.8 365.5,209.5 370.2,204.0 369.6,206.6"/><polygon points="400.5,417.3 413.7,412.5 431.4,423.8 417.9,428.6"/><polygon points="370.4,201.8 370.3,200.1 376.5,190.2 376.7,193.1"/><polygon points="554.8,420.7 570.2,403.0 584.6,402.7 570.6,418.7"/><polygon points="360.1,220.6 361.0,219.5 360.9,224.7 359.1,227.0"/><polygon points="620.9,208.1 621.3,188.1 633.7,202.5 633.4,221.6"/><polygon points="469.0,439.2 484.6,428.9 503.5,433.1 488.4,443.1"/><polygon points="598.6,383.4 611.9,361.8 621.5,364.2 609.7,383.3"/><polygon points="364.8,212.2 365.2,210.8 369.6,206.6 368.7,209.6"/><polygon points="327.1,310.5 333.2,310.7 339.0,331.7 331.9,331.4"/><polygon points="361.0,219.5 361.9,218.2 362.7,222.0 360.9,224.7"/><polygon points="364.2,213.7 364.8,212.2 368.7,209.6 367.5,212.7"/><polygon points="355.8,230.1 357.3,228.8 354.7,238.5 352.1,240.7"/><polygon points="486.1,123.1 481.4,114.3 502.5,113.7 507.7,123.1"/><polygon points="361.9,218.2 362.7,216.7 364.4,219.1 362.7,222.0"/><polygon points="624.0,338.7 634.3,315.0 641.3,322.9 632.1,343.8"/><polygon points="363.5,215.2 364.2,213.7 367.5,212.7 366.1,215.9"/><polygon points="333.8,271.1 337.6,271.1 330.0,289.2 325.0,289.2"/><polygon points="362.7,216.7 363.5,215.2 366.1,215.9 364.4,219.1"/><polygon points="325.0,289.2 330.0,289.2 333.2,310.7 327.1,310.5"/><polygon points="349.8,241.8 352.1,240.7 347.6,253.6 344.2,255.2"/><polygon points="611.9,361.8 624.0,338.7 632.1,343.8 621.5,364.2"/><polygon points="384.1,178.2 382.9,175.3 391.3,160.0 393.1,163.9"/><polygon points="370.2,204.0 370.4,201.8 376.7,193.1 376.4,196.8"/><polygon points="571.8,154.0 569.0,138.0 587.2,147.6 590.1,163.6"/><polygon points="357.3,228.8 359.1,227.0 357.6,235.5 354.7,238.5"/><polygon points="464.5,125.6 460.4,117.5 481.4,114.3 486.1,123.1"/><polygon points="376.7,193.1 376.5,190.2 384.1,178.2 384.5,182.4"/><polygon points="384.4,403.7 397.1,399.0 413.7,412.5 400.5,417.3"/><polygon points="633.9,281.0 640.2,257.1 648.2,270.1 642.5,291.9"/><polygon points="629.8,244.4 633.4,221.6 643.5,235.9 640.2,257.1"/><polygon points="369.6,206.6 370.2,204.0 376.4,196.8 375.4,201.2"/><polygon points="443.3,130.6 439.7,123.4 460.4,117.5 464.5,125.6"/><polygon points="393.1,163.9 391.3,160.0 401.0,142.5 403.4,147.6"/><polygon points="344.2,255.2 347.6,253.6 342.3,268.9 337.6,271.1"/><polygon points="359.1,227.0 360.9,224.7 360.7,231.7 357.6,235.5"/><polygon points="352.1,240.7 354.7,238.5 351.5,250.5 347.6,253.6"/><polygon points="422.8,137.9 419.8,131.7 439.7,123.4 443.3,130.6"/><polygon points="368.7,209.6 369.6,206.6 375.4,201.2 373.9,206.2"/><polygon points="403.4,147.6 401.0,142.5 419.8,131.7 422.8,137.9"/><polygon points="449.9,432.8 465.7,422.2 484.6,428.9 469.0,439.2"/><polygon points="360.9,224.7 362.7,222.0 363.7,227.1 360.7,231.7"/><polygon points="370.1,388.1 382.0,383.5 397.1,399.0 384.4,403.7"/><polygon points="503.5,433.1 520.1,417.8 537.9,420.4 522.1,434.9"/><polygon points="606.2,195.7 606.7,175.0 621.3,188.1 620.9,208.1"/><polygon points="367.5,212.7 368.7,209.6 373.9,206.2 371.9,211.4"/><polygon points="570.2,403.0 585.6,381.8 598.6,383.4 584.6,402.7"/><polygon points="376.4,196.8 376.7,193.1 384.5,182.4 383.9,188.0"/><polygon points="552.1,146.3 549.5,130.6 569.0,138.0 571.8,154.0"/><polygon points="362.7,222.0 364.4,219.1 366.7,222.1 363.7,227.1"/><polygon points="366.1,215.9 367.5,212.7 371.9,211.4 369.4,216.8"/><polygon points="364.4,219.1 366.1,215.9 369.4,216.8 366.7,222.1"/><polygon points="384.5,182.4 384.1,178.2 393.1,163.9 393.6,169.8"/><polygon points="354.7,238.5 357.6,235.5 355.9,245.9 351.5,250.5"/><polygon points="357.5,370.7 368.6,366.3 382.0,383.5 370.1,388.1"/><polygon points="537.9,420.4 554.4,401.4 570.2,403.0 554.8,420.7"/><polygon points="337.6,271.1 342.3,268.9 336.2,286.4 330.0,289.2"/><polygon points="624.9,306.5 633.9,281.0 642.5,291.9 634.3,315.0"/><polygon points="375.4,201.2 376.4,196.8 383.9,188.0 382.5,194.6"/><polygon points="347.6,253.6 351.5,250.5 347.8,264.5 342.3,268.9"/><polygon points="347.1,351.8 357.2,347.6 368.6,366.3 357.5,370.7"/><polygon points="531.3,140.8 529.0,125.6 549.5,130.6 552.1,146.3"/><polygon points="330.0,289.2 336.2,286.4 340.8,307.3 333.2,310.7"/><polygon points="431.4,423.8 447.0,413.1 465.7,422.2 449.9,432.8"/><polygon points="585.6,381.8 600.2,358.0 611.9,361.8 598.6,383.4"/><polygon points="339.0,331.7 347.9,327.9 357.2,347.6 347.1,351.8"/><polygon points="357.6,235.5 360.7,231.7 360.4,240.2 355.9,245.9"/><polygon points="333.2,310.7 340.8,307.3 347.9,327.9 339.0,331.7"/><polygon points="617.0,232.1 620.9,208.1 633.4,221.6 629.8,244.4"/><polygon points="613.5,332.5 624.9,306.5 634.3,315.0 624.0,338.7"/><polygon points="373.9,206.2 375.4,201.2 382.5,194.6 380.2,202.0"/><polygon points="600.2,358.0 613.5,332.5 624.0,338.7 611.9,361.8"/><polygon points="393.6,169.8 393.1,163.9 403.4,147.6 404.1,155.4"/><polygon points="589.5,184.6 590.1,163.6 606.7,175.0 606.2,195.7"/><polygon points="383.9,188.0 384.5,182.4 393.6,169.8 392.9,177.5"/><polygon points="623.0,270.0 629.8,244.4 640.2,257.1 633.9,281.0"/><polygon points="360.7,231.7 363.7,227.1 365.0,233.4 360.4,240.2"/><polygon points="509.8,137.5 507.7,123.1 529.0,125.6 531.3,140.8"/><polygon points="484.6,428.9 501.7,413.0 520.1,417.8 503.5,433.1"/><polygon points="371.9,211.4 373.9,206.2 380.2,202.0 377.2,209.9"/><polygon points="363.7,227.1 366.7,222.1 369.5,225.9 365.0,233.4"/><polygon points="369.4,216.8 371.9,211.4 377.2,209.9 373.6,217.9"/><polygon points="366.7,222.1 369.4,216.8 373.6,217.9 369.5,225.9"/><polygon points="351.5,250.5 355.9,245.9 353.8,258.3 347.8,264.5"/><polygon points="404.1,155.4 403.4,147.6 422.8,137.9 423.8,147.4"/><polygon points="413.7,412.5 429.0,401.9 447.0,413.1 431.4,423.8"/><polygon points="487.9,136.6 486.1,123.1 507.7,123.1 509.8,137.5"/><polygon points="342.3,268.9 347.8,264.5 343.5,280.7 336.2,286.4"/><polygon points="423.8,147.4 422.8,137.9 443.3,130.6 444.5,141.5"/><polygon points="466.0,137.9 464.5,125.6 486.1,123.1 487.9,136.6"/><polygon points="554.4,401.4 570.9,378.6 585.6,381.8 570.2,403.0"/><polygon points="444.5,141.5 443.3,130.6 464.5,125.6 466.0,137.9"/><polygon points="382.5,194.6 383.9,188.0 392.9,177.5 390.9,186.7"/><polygon points="520.1,417.8 537.4,397.7 554.4,401.4 537.9,420.4"/><polygon points="571.0,174.9 571.8,154.0 590.1,163.6 589.5,184.6"/><polygon points="397.1,399.0 411.9,388.6 429.0,401.9 413.7,412.5"/><polygon points="355.9,245.9 360.4,240.2 360.2,250.3 353.8,258.3"/><polygon points="613.2,297.4 623.0,270.0 633.9,281.0 624.9,306.5"/><polygon points="602.1,220.5 606.2,195.7 620.9,208.1 617.0,232.1"/><polygon points="392.9,177.5 393.6,169.8 404.1,155.4 403.2,165.5"/><polygon points="465.7,422.2 483.0,406.0 501.7,413.0 484.6,428.9"/><polygon points="336.2,286.4 343.5,280.7 349.7,300.5 340.8,307.3"/><polygon points="380.2,202.0 382.5,194.6 390.9,186.7 387.8,197.0"/><polygon points="570.9,378.6 586.6,352.9 600.2,358.0 585.6,381.8"/><polygon points="382.0,383.5 396.0,373.5 411.9,388.6 397.1,399.0"/><polygon points="609.8,259.1 617.0,232.1 629.8,244.4 623.0,270.0"/><polygon points="360.4,240.2 365.0,233.4 366.6,240.8 360.2,250.3"/><polygon points="340.8,307.3 349.7,300.5 358.2,320.0 347.9,327.9"/><polygon points="551.2,167.0 552.1,146.3 571.8,154.0 571.0,174.9"/><polygon points="600.9,325.5 613.2,297.4 624.9,306.5 613.5,332.5"/><polygon points="347.8,264.5 353.8,258.3 351.4,272.5 343.5,280.7"/><polygon points="368.6,366.3 381.6,356.8 396.0,373.5 382.0,383.5"/><polygon points="586.6,352.9 600.9,325.5 613.5,332.5 600.2,358.0"/><polygon points="377.2,209.9 380.2,202.0 387.8,197.0 383.6,208.0"/><polygon points="347.9,327.9 358.2,320.0 368.9,338.9 357.2,347.6"/><polygon points="357.2,347.6 368.9,338.9 381.6,356.8 368.6,366.3"/><polygon points="365.0,233.4 369.5,225.9 372.8,230.4 366.6,240.8"/><polygon points="403.2,165.5 404.1,155.4 423.8,147.4 422.7,159.7"/><polygon points="373.6,217.9 377.2,209.9 383.6,208.0 378.5,219.3"/><polygon points="369.5,225.9 373.6,217.9 378.5,219.3 372.8,230.4"/><polygon points="501.7,413.0 519.6,392.1 537.4,397.7 520.1,417.8"/><polygon points="447.0,413.1 464.2,396.8 483.0,406.0 465.7,422.2"/><polygon points="390.9,186.7 392.9,177.5 403.2,165.5 400.6,177.6"/><polygon points="530.3,160.8 531.3,140.8 552.1,146.3 551.2,167.0"/><polygon points="537.4,397.7 554.8,373.7 570.9,378.6 554.4,401.4"/><polygon points="585.2,209.8 589.5,184.6 606.2,195.7 602.1,220.5"/><polygon points="422.7,159.7 423.8,147.4 444.5,141.5 443.4,155.9"/><polygon points="508.7,156.5 509.8,137.5 531.3,140.8 530.3,160.8"/><polygon points="343.5,280.7 351.4,272.5 359.5,290.5 349.7,300.5"/><polygon points="353.8,258.3 360.2,250.3 359.8,261.9 351.4,272.5"/><polygon points="599.4,288.0 609.8,259.1 623.0,270.0 613.2,297.4"/><polygon points="443.4,155.9 444.5,141.5 466.0,137.9 464.9,154.1"/><polygon points="486.8,154.3 487.9,136.6 509.8,137.5 508.7,156.5"/><polygon points="464.9,154.1 466.0,137.9 487.9,136.6 486.8,154.3"/><polygon points="594.5,248.5 602.1,220.5 617.0,232.1 609.8,259.1"/><polygon points="429.0,401.9 445.8,385.7 464.2,396.8 447.0,413.1"/><polygon points="387.8,197.0 390.9,186.7 400.6,177.6 396.4,191.3"/><polygon points="554.8,373.7 571.3,346.5 586.6,352.9 570.9,378.6"/><polygon points="566.6,200.2 571.0,174.9 589.5,184.6 585.2,209.8"/><polygon points="400.6,177.6 403.2,165.5 422.7,159.7 419.6,174.5"/><polygon points="483.0,406.0 501.1,384.7 519.6,392.1 501.7,413.0"/><polygon points="349.7,300.5 359.5,290.5 369.7,308.4 358.2,320.0"/><polygon points="586.4,317.6 599.4,288.0 613.2,297.4 600.9,325.5"/><polygon points="360.2,250.3 366.6,240.8 368.3,249.4 359.8,261.9"/><polygon points="571.3,346.5 586.4,317.6 600.9,325.5 586.6,352.9"/><polygon points="411.9,388.6 428.1,372.8 445.8,385.7 429.0,401.9"/><polygon points="383.6,208.0 387.8,197.0 396.4,191.3 390.9,205.8"/><polygon points="519.6,392.1 537.4,367.2 554.8,373.7 537.4,397.7"/><polygon points="358.2,320.0 369.7,308.4 381.8,325.9 368.9,338.9"/><polygon points="366.6,240.8 372.8,230.4 376.5,235.5 368.3,249.4"/><polygon points="396.0,373.5 411.3,358.4 428.1,372.8 411.9,388.6"/><polygon points="351.4,272.5 359.8,261.9 369.8,277.6 359.5,290.5"/><polygon points="378.5,219.3 383.6,208.0 390.9,205.8 384.2,220.8"/><polygon points="368.9,338.9 381.8,325.9 395.8,342.7 381.6,356.8"/><polygon points="381.6,356.8 395.8,342.7 411.3,358.4 396.0,373.5"/><polygon points="372.8,230.4 378.5,219.3 384.2,220.8 376.5,235.5"/><polygon points="546.8,191.8 551.2,167.0 571.0,174.9 566.6,200.2"/><polygon points="419.6,174.5 422.7,159.7 443.4,155.9 439.9,173.2"/><polygon points="577.4,238.2 585.2,209.8 602.1,220.5 594.5,248.5"/><polygon points="583.7,278.4 594.5,248.5 609.8,259.1 599.4,288.0"/><polygon points="464.2,396.8 482.3,375.4 501.1,384.7 483.0,406.0"/><polygon points="396.4,191.3 400.6,177.6 419.6,174.5 414.6,191.2"/><polygon points="525.9,184.8 530.3,160.8 551.2,167.0 546.8,191.8"/><polygon points="439.9,173.2 443.4,155.9 464.9,154.1 461.0,173.5"/><polygon points="537.4,367.2 554.6,339.0 571.3,346.5 554.8,373.7"/><polygon points="359.5,290.5 369.8,277.6 381.7,293.4 369.7,308.4"/><polygon points="359.8,261.9 368.3,249.4 380.2,262.4 369.8,277.6"/><polygon points="504.4,179.4 508.7,156.5 530.3,160.8 525.9,184.8"/><polygon points="461.0,173.5 464.9,154.1 486.8,154.3 482.6,175.6"/><polygon points="570.2,309.0 583.7,278.4 599.4,288.0 586.4,317.6"/><polygon points="482.6,175.6 486.8,154.3 508.7,156.5 504.4,179.4"/><polygon points="501.1,384.7 519.2,359.2 537.4,367.2 519.6,392.1"/><polygon points="554.6,339.0 570.2,309.0 586.4,317.6 571.3,346.5"/><polygon points="445.8,385.7 463.5,364.6 482.3,375.4 464.2,396.8"/><polygon points="390.9,205.8 396.4,191.3 414.6,191.2 407.8,209.0"/><polygon points="558.7,228.6 566.6,200.2 585.2,209.8 577.4,238.2"/><polygon points="414.6,191.2 419.6,174.5 439.9,173.2 434.0,192.6"/><polygon points="368.3,249.4 376.5,235.5 390.3,245.4 380.2,262.4"/><polygon points="369.7,308.4 381.7,293.4 395.5,309.1 381.8,325.9"/><polygon points="566.4,268.7 577.4,238.2 594.5,248.5 583.7,278.4"/><polygon points="384.2,220.8 390.9,205.8 407.8,209.0 399.6,227.4"/><polygon points="376.5,235.5 384.2,220.8 399.6,227.4 390.3,245.4"/><polygon points="428.1,372.8 445.2,352.3 463.5,364.6 445.8,385.7"/><polygon points="381.8,325.9 395.5,309.1 410.8,324.3 395.8,342.7"/><polygon points="369.8,277.6 380.2,262.4 393.9,275.7 381.7,293.4"/><polygon points="411.3,358.4 427.5,338.8 445.2,352.3 428.1,372.8"/><polygon points="538.9,219.8 546.8,191.8 566.6,200.2 558.7,228.6"/><polygon points="395.8,342.7 410.8,324.3 427.5,338.8 411.3,358.4"/><polygon points="519.2,359.2 536.6,330.5 554.6,339.0 537.4,367.2"/><polygon points="482.3,375.4 500.4,349.8 519.2,359.2 501.1,384.7"/><polygon points="434.0,192.6 439.9,173.2 461.0,173.5 454.5,195.4"/><polygon points="552.6,299.9 566.4,268.7 583.7,278.4 570.2,309.0"/><polygon points="407.8,209.0 414.6,191.2 434.0,192.6 426.2,213.4"/><polygon points="536.6,330.5 552.6,299.9 570.2,309.0 554.6,339.0"/><polygon points="518.2,211.9 525.9,184.8 546.8,191.8 538.9,219.8"/><polygon points="454.5,195.4 461.0,173.5 482.6,175.6 475.6,199.6"/><polygon points="547.7,259.1 558.7,228.6 577.4,238.2 566.4,268.7"/><polygon points="380.2,262.4 390.3,245.4 405.7,255.9 393.9,275.7"/><polygon points="381.7,293.4 393.9,275.7 409.3,289.1 395.5,309.1"/><polygon points="496.9,205.2 504.4,179.4 525.9,184.8 518.2,211.9"/><polygon points="399.6,227.4 407.8,209.0 426.2,213.4 416.6,234.8"/><polygon points="475.6,199.6 482.6,175.6 504.4,179.4 496.9,205.2"/><polygon points="463.5,364.6 481.3,339.3 500.4,349.8 482.3,375.4"/><polygon points="390.3,245.4 399.6,227.4 416.6,234.8 405.7,255.9"/><polygon points="500.4,349.8 517.8,321.1 536.6,330.5 519.2,359.2"/><polygon points="426.2,213.4 434.0,192.6 454.5,195.4 445.7,218.9"/><polygon points="395.5,309.1 409.3,289.1 426.0,302.4 410.8,324.3"/><polygon points="445.2,352.3 462.3,327.8 481.3,339.3 463.5,364.6"/><polygon points="533.8,290.4 547.7,259.1 566.4,268.7 552.6,299.9"/><polygon points="527.9,249.9 538.9,219.8 558.7,228.6 547.7,259.1"/><polygon points="517.8,321.1 533.8,290.4 552.6,299.9 536.6,330.5"/><polygon points="427.5,338.8 443.8,315.4 462.3,327.8 445.2,352.3"/><polygon points="410.8,324.3 426.0,302.4 443.8,315.4 427.5,338.8"/><polygon points="393.9,275.7 405.7,255.9 422.6,266.8 409.3,289.1"/><polygon points="416.6,234.8 426.2,213.4 445.7,218.9 434.9,243.1"/><polygon points="445.7,218.9 454.5,195.4 475.6,199.6 466.0,225.5"/><polygon points="405.7,255.9 416.6,234.8 434.9,243.1 422.6,266.8"/><polygon points="481.3,339.3 498.5,310.9 517.8,321.1 500.4,349.8"/><polygon points="507.5,241.1 518.2,211.9 538.9,219.8 527.9,249.9"/><polygon points="466.0,225.5 475.6,199.6 496.9,205.2 486.7,232.9"/><polygon points="486.7,232.9 496.9,205.2 518.2,211.9 507.5,241.1"/><polygon points="514.2,280.7 527.9,249.9 547.7,259.1 533.8,290.4"/><polygon points="409.3,289.1 422.6,266.8 440.6,278.0 426.0,302.4"/><polygon points="498.5,310.9 514.2,280.7 533.8,290.4 517.8,321.1"/><polygon points="462.3,327.8 478.9,300.2 498.5,310.9 481.3,339.3"/><polygon points="434.9,243.1 445.7,218.9 466.0,225.5 454.2,251.9"/><polygon points="422.6,266.8 434.9,243.1 454.2,251.9 440.6,278.0"/><polygon points="426.0,302.4 440.6,278.0 459.5,289.2 443.8,315.4"/><polygon points="443.8,315.4 459.5,289.2 478.9,300.2 462.3,327.8"/><polygon points="494.2,270.9 507.5,241.1 527.9,249.9 514.2,280.7"/><polygon points="478.9,300.2 494.2,270.9 514.2,280.7 498.5,310.9"/><polygon points="454.2,251.9 466.0,225.5 486.7,232.9 474.0,261.3"/><polygon points="474.0,261.3 486.7,232.9 507.5,241.1 494.2,270.9"/><polygon points="440.6,278.0 454.2,251.9 474.0,261.3 459.5,289.2"/><polygon points="459.5,289.2 474.0,261.3 494.2,270.9 478.9,300.2"/></g></svg>
<div style="position:absolute;left:253.2px;top:672.7px;font-size:16px;line-height:16px;color:#fff;white-space:nowrap;transform:scaleX(1.1999);transform-origin:0 0;">ODB: Job-1_SphereBolt.odb</div>
<div style="position:absolute;left:520.6px;top:672.7px;font-size:16px;line-height:16px;color:#fff;white-space:nowrap;transform:scaleX(1.1709);transform-origin:0 0;">Abaqus/Standard 3DEXPERIENCE R2016x</div>
<div style="position:absolute;left:908.7px;top:672.7px;font-size:16px;line-height:16px;color:#fff;white-space:nowrap;transform:scaleX(1.2447);transform-origin:0 0;">Tue Sep 28 15:11:07 GMT+08:00 2021</div>
<div style="position:absolute;left:253.2px;top:717.1px;font-size:16px;line-height:16px;color:#fff;white-space:nowrap;transform:scaleX(1.2711);transform-origin:0 0;">Step: Step-1</div>
<div style="position:absolute;left:253.2px;top:735.1px;font-size:16px;line-height:16px;color:#fff;white-space:nowrap;transform:scaleX(1.2761);transform-origin:0 0;">Increment</div>
<div style="position:absolute;left:367.6px;top:735.1px;font-size:16px;line-height:16px;color:#fff;white-space:nowrap;transform:scaleX(1.2646);transform-origin:0 0;">100: Arc Length =</div>
<div style="position:absolute;left:544.8px;top:735.1px;font-size:16px;line-height:16px;color:#fff;white-space:nowrap;transform:scaleX(1.2558);transform-origin:0 0;">3.6028E+05</div>
<div style="position:absolute;left:1323.2px;top:766.8px;font-size:21px;line-height:21px;color:#c2c2c2;white-space:nowrap;transform:scaleX(0.8450);transform-origin:0 0;">CSDN @easy_R</div>
<svg width="1473" height="800" style="position:absolute;left:0;top:0">
<path d="M112.5 20.9 L127.9 27.5 L123.8 30 L174.8 104.7 L116.8 33.8 L114.3 38.2Z" fill="#ff2121"/>
<g>
<path d="M172.5 736 L174.5 737.5 L191.5 713.5 L188.5 711.5Z" fill="#22c822"/>
<path d="M184 708.3 L197.8 698 L196.5 714.5 Z" fill="#1cb81c"/>
<path d="M173 736 L194.5 744.5 L194.5 748 L173 739Z" fill="#b00000"/>
<path d="M192.3 744 L201.3 741.5 L209.5 753.7 L194 752Z" fill="#e00000"/>
<path d="M195 748 L209.5 753.7 L200 754Z" fill="#900000"/>
<path d="M173 735.8 L179.3 739 L187.5 741.5 L192.3 747.5 L191 753.7 L185.4 754.4 L180 750.3 L173.7 740Z" fill="#0000c8"/>
</g>
<g font-family="Liberation Sans" font-weight="bold" fill="#fff">
<text x="199.3" y="687.8" font-size="16" transform="translate(199.3 0) scale(1.2 1) translate(-199.3 0)">Y</text>
<text x="192.8" y="763.4" font-size="15.5" transform="translate(192.8 0) scale(1.08 1) translate(-192.8 0)">Z</text>
<text x="216" y="765.5" font-size="15.5" transform="translate(216 0) scale(1.12 1) translate(-216 0)">X</text>
</g>
<g stroke="#d8c8f8" stroke-width="1.6" stroke-linejoin="round">
<ellipse cx="1376.2" cy="137.2" rx="29" ry="3.6" transform="rotate(31.5 1376.2 137.2)" fill="#003a3a"/>
<path d="M1412 77.4 Q1430 95 1428 108 Q1427 118 1421.8 124.5 L1410.5 117.5 Q1418 100 1412 77.4Z" fill="#003a3a"/>
<path d="M1412 77.4 Q1418 100 1410.5 117.5 L1408 122.8 L1392 109.8 Z" fill="#000070"/>
<path d="M1392 109.8 L1410.5 117.5" fill="none"/>
<path d="M1376 137 L1414 71.5" fill="none"/>
</g>
<circle cx="1417" cy="68" r="4" fill="#dcd0f8"/>
<rect x="1371" y="132" width="9.7" height="9.8" fill="#d00010"/>
<g font-family="Liberation Sans" font-size="9.5" fill="#ffff00"><text x="1419.5" y="60.5">Y</text><text x="1405.8" y="131">Z</text><text x="1425.5" y="132">X</text></g>
</svg>
</body></html>
